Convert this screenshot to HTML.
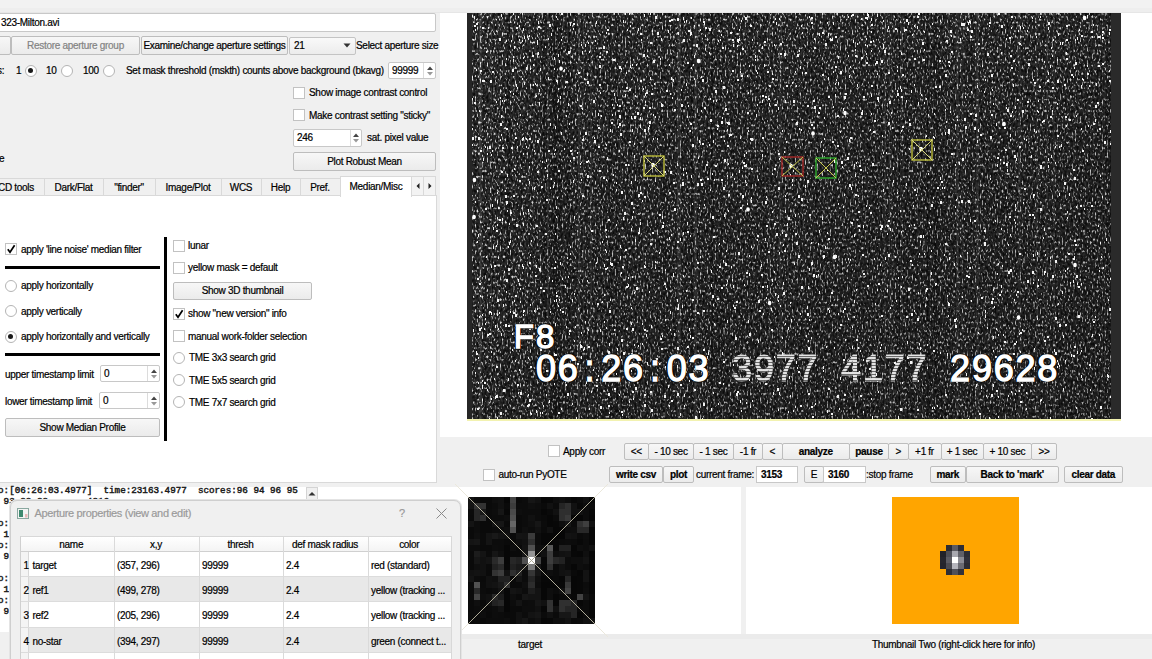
<!DOCTYPE html><html><head><meta charset="utf-8"><style>
*{box-sizing:border-box}
html,body{margin:0;padding:0}
body{width:1152px;height:659px;overflow:hidden;position:relative;background:#f0f0f0;
 font-family:"Liberation Sans",sans-serif;font-size:10px;letter-spacing:-0.3px;color:#000;-webkit-text-stroke-width:0.2px}
.a{position:absolute}
.t{position:absolute;white-space:nowrap;line-height:12px;height:12px}
.btn{position:absolute;border:1px solid #bdbdbd;border-radius:2px;background:linear-gradient(#f7f7f7,#ebebeb);
 text-align:center;white-space:nowrap}
.btn span{position:absolute;left:0;right:0;line-height:12px}
.inp{position:absolute;background:#fff;border:1px solid #c8c8c8;border-radius:2px;white-space:nowrap}
.cb{position:absolute;width:12px;height:12px;border:1px solid #c2c2c2;background:#fff}
.rb{position:absolute;width:12px;height:12px;border:1.5px solid #b4b4b4;border-radius:50%;background:#fff}
.rb.on::after{content:"";position:absolute;left:2px;top:2px;width:5px;height:5px;border-radius:50%;background:#1a1a1a}
.chk::after{content:"";position:absolute;left:3.5px;top:0px;width:3.5px;height:8px;border:solid #000;border-width:0 2px 2px 0;transform:rotate(35deg)}
.mono{font-family:"Liberation Mono",monospace;font-weight:bold;letter-spacing:0}
.b{font-weight:bold}
</style></head><body><div class="a" style="left:0px;top:0px;width:1152px;height:8px;background:#f2f2f2"></div><div class="a" style="left:0px;top:8px;width:1152px;height:5px;background:#eeeeee"></div><div class="a" style="left:0px;top:12px;width:1152px;height:1px;background:#e6e6e6"></div><div class="a" style="left:440px;top:13px;width:712px;height:424px;background:#fff"></div><div class="inp" style="left:-4px;top:13px;width:440px;height:19px"></div><div class="t" style="left:1px;top:16.5px;">323-Milton.avi</div><div class="btn" style="left:-10px;top:36px;width:21px;height:19px;"><span style="top:2.8px;"></span></div><div class="btn" style="left:11px;top:36px;width:129px;height:19px;"><span style="top:2.8px;color:#838383">Restore aperture group</span></div><div class="btn" style="left:141px;top:36px;width:147px;height:19px;"><span style="top:2.8px;">Examine/change aperture settings</span></div><div class="a" style="left:289px;top:37px;width:67px;height:18px;background:linear-gradient(#f9f9f9,#ececec);border:1px solid #c4c4c4;border-radius:2px"></div><div class="t" style="left:294px;top:40.0px;">21</div><svg class="a" style="left:343px;top:43px" width="8" height="5"><path d="M0.5 0.5 L4 4.5 L7.5 0.5z" fill="#333"/></svg><div class="t" style="left:356px;top:40.0px;">Select aperture size</div><div class="t" style="left:-3px;top:64.5px;">s:</div><div class="t" style="left:16px;top:64.5px;">1</div><div class="rb on" style="left:25.0px;top:64.5px"></div><div class="t" style="left:46px;top:64.5px;">10</div><div class="rb" style="left:61.0px;top:64.5px"></div><div class="t" style="left:83px;top:64.5px;">100</div><div class="rb" style="left:102.5px;top:64.5px"></div><div class="t" style="left:126px;top:64.5px;">Set mask threshold (mskth) counts above background (bkavg)</div><div class="inp" style="left:388px;top:62px;width:48px;height:17px"></div><div class="a" style="left:423px;top:63px;width:1px;height:15px;background:#dcdcdc"></div><svg class="a" style="left:425.5px;top:64.5px" width="8" height="12"><path d="M1 5 L4 1.5 L7 5z" fill="#444"/><path d="M1 7 L4 10.5 L7 7z" fill="#999"/></svg><div class="t" style="left:392px;top:64.8px;">99999</div><div class="cb" style="left:293px;top:87.0px"></div><div class="t" style="left:309px;top:87.0px;">Show image contrast control</div><div class="cb" style="left:293px;top:109.0px"></div><div class="t" style="left:309px;top:109.5px;">Make contrast setting "sticky"</div><div class="inp" style="left:293px;top:129px;width:69px;height:18px"></div><div class="a" style="left:350px;top:130px;width:1px;height:16px;background:#dcdcdc"></div><svg class="a" style="left:352.0px;top:132.0px" width="8" height="12"><path d="M1 5 L4 1.5 L7 5z" fill="#444"/><path d="M1 7 L4 10.5 L7 7z" fill="#999"/></svg><div class="t" style="left:297px;top:132.3px;">246</div><div class="t" style="left:367px;top:132.0px;">sat. pixel value</div><div class="btn" style="left:293px;top:152px;width:143px;height:19px;"><span style="top:2.8px;">Plot Robust Mean</span></div><div class="t" style="left:-1px;top:152.5px;">e</div><div class="a" style="left:-20px;top:178px;width:65px;height:18px;background:#f0f0f0;border:1px solid #d9d9d9;border-bottom:none"></div><div class="t" style="left:-2px;top:181.5px;">CD tools</div><div class="a" style="left:44px;top:178px;width:60px;height:18px;background:#f0f0f0;border:1px solid #d9d9d9;border-bottom:none"></div><div class="t" style="left:44px;width:59px;text-align:center;top:181.5px;">Dark/Flat</div><div class="a" style="left:103px;top:178px;width:53px;height:18px;background:#f0f0f0;border:1px solid #d9d9d9;border-bottom:none"></div><div class="t" style="left:103px;width:52px;text-align:center;top:181.5px;">"finder"</div><div class="a" style="left:155px;top:178px;width:67px;height:18px;background:#f0f0f0;border:1px solid #d9d9d9;border-bottom:none"></div><div class="t" style="left:155px;width:66px;text-align:center;top:181.5px;">Image/Plot</div><div class="a" style="left:221px;top:178px;width:41px;height:18px;background:#f0f0f0;border:1px solid #d9d9d9;border-bottom:none"></div><div class="t" style="left:221px;width:40px;text-align:center;top:181.5px;">WCS</div><div class="a" style="left:261px;top:178px;width:40px;height:18px;background:#f0f0f0;border:1px solid #d9d9d9;border-bottom:none"></div><div class="t" style="left:261px;width:39px;text-align:center;top:181.5px;">Help</div><div class="a" style="left:300px;top:178px;width:41px;height:18px;background:#f0f0f0;border:1px solid #d9d9d9;border-bottom:none"></div><div class="t" style="left:300px;width:40px;text-align:center;top:181.5px;">Pref.</div><div class="a" style="left:-5px;top:195px;width:442px;height:288px;background:#fff;border:1px solid #d9d9d9"></div><div class="a" style="left:340px;top:176px;width:72px;height:21px;background:#fff;border:1px solid #d9d9d9;border-bottom:none"></div><div class="t" style="left:340px;width:72px;text-align:center;top:180.5px;">Median/Misc</div><div class="a" style="left:411px;top:176px;width:13px;height:20px;background:#f3f3f3;border:1px solid #d9d9d9"></div><div class="a" style="left:423px;top:176px;width:13px;height:20px;background:#f3f3f3;border:1px solid #d9d9d9"></div><svg class="a" style="left:414px;top:182px" width="20" height="8"><path d="M5.5 1 L2.5 4 L5.5 7z M14.5 1 L17.5 4 L14.5 7z" fill="#222"/></svg><div class="cb" style="left:4.5px;top:243.0px"><svg width="10" height="10" style="position:absolute;left:0;top:0"><path d="M1.8 5.2 L4 8.2 L8.6 1.2" fill="none" stroke="#000" stroke-width="1.7"/></svg></div><div class="t" style="left:21px;top:243.5px;">apply 'line noise' median filter</div><div class="a" style="left:5px;top:266px;width:155px;height:3px;background:#000"></div><div class="rb" style="left:4.5px;top:279.5px"></div><div class="t" style="left:21px;top:280.0px;">apply horizontally</div><div class="rb" style="left:4.5px;top:305.0px"></div><div class="t" style="left:21px;top:305.5px;">apply vertically</div><div class="rb on" style="left:4.5px;top:330.5px"></div><div class="t" style="left:21px;top:331.0px;">apply horizontally and vertically</div><div class="a" style="left:5px;top:353px;width:155px;height:3px;background:#000"></div><div class="t" style="left:5px;top:368.5px;">upper timestamp limit</div><div class="inp" style="left:100px;top:365px;width:60px;height:17px"></div><div class="a" style="left:147px;top:366px;width:1px;height:15px;background:#dcdcdc"></div><svg class="a" style="left:149.5px;top:367.5px" width="8" height="12"><path d="M1 5 L4 1.5 L7 5z" fill="#444"/><path d="M1 7 L4 10.5 L7 7z" fill="#999"/></svg><div class="t" style="left:104px;top:367.8px;">0</div><div class="t" style="left:5px;top:395.5px;">lower timestamp limit</div><div class="inp" style="left:99px;top:392px;width:61px;height:17px"></div><div class="a" style="left:147px;top:393px;width:1px;height:15px;background:#dcdcdc"></div><svg class="a" style="left:149.5px;top:394.5px" width="8" height="12"><path d="M1 5 L4 1.5 L7 5z" fill="#444"/><path d="M1 7 L4 10.5 L7 7z" fill="#999"/></svg><div class="t" style="left:103px;top:394.8px;">0</div><div class="btn" style="left:5px;top:418px;width:155px;height:19px;"><span style="top:2.8px;">Show Median Profile</span></div><div class="a" style="left:164px;top:237px;width:3px;height:204px;background:#000"></div><div class="cb" style="left:173px;top:239.5px"></div><div class="t" style="left:188px;top:240.0px;">lunar</div><div class="cb" style="left:173px;top:261.5px"></div><div class="t" style="left:188px;top:262.0px;">yellow mask = default</div><div class="btn" style="left:173px;top:282px;width:139px;height:18px;"><span style="top:2.3px;">Show 3D thumbnail</span></div><div class="cb" style="left:173px;top:307.5px"><svg width="10" height="10" style="position:absolute;left:0;top:0"><path d="M1.8 5.2 L4 8.2 L8.6 1.2" fill="none" stroke="#000" stroke-width="1.7"/></svg></div><div class="t" style="left:188px;top:308.0px;">show "new version" info</div><div class="cb" style="left:173px;top:330.0px"></div><div class="t" style="left:188px;top:330.5px;">manual work-folder selection</div><div class="rb" style="left:172.5px;top:351.5px"></div><div class="t" style="left:189px;top:352.0px;">TME 3x3 search grid</div><div class="rb" style="left:172.5px;top:374.0px"></div><div class="t" style="left:189px;top:374.5px;">TME 5x5 search grid</div><div class="rb" style="left:172.5px;top:396.0px"></div><div class="t" style="left:189px;top:396.5px;">TME 7x7 search grid</div><div class="cb" style="left:547.5px;top:445.0px"></div><div class="t" style="left:563px;top:445.5px;">Apply corr</div><div class="cb" style="left:482.5px;top:468.5px"></div><div class="t" style="left:498.5px;top:469.0px;">auto-run PyOTE</div><div class="btn" style="left:623.5px;top:443px;width:25.5px;height:17px;"><span style="top:1.5px;">&lt;&lt;</span></div><div class="btn" style="left:648px;top:443px;width:46px;height:17px;"><span style="top:1.5px;">- 10 sec</span></div><div class="btn" style="left:693px;top:443px;width:41px;height:17px;"><span style="top:1.5px;">- 1 sec</span></div><div class="btn" style="left:733px;top:443px;width:30px;height:17px;"><span style="top:1.5px;">-1 fr</span></div><div class="btn" style="left:762px;top:443px;width:20.5px;height:17px;"><span style="top:1.5px;">&lt;</span></div><div class="btn" style="left:781.5px;top:443px;width:68.5px;height:17px;"><span style="top:1.5px;font-weight:bold">analyze</span></div><div class="btn" style="left:849px;top:443px;width:40px;height:17px;"><span style="top:1.5px;font-weight:bold">pause</span></div><div class="btn" style="left:888px;top:443px;width:20.5px;height:17px;"><span style="top:1.5px;">&gt;</span></div><div class="btn" style="left:907.5px;top:443px;width:34.0px;height:17px;"><span style="top:1.5px;">+1 fr</span></div><div class="btn" style="left:940.5px;top:443px;width:43.0px;height:17px;"><span style="top:1.5px;">+ 1 sec</span></div><div class="btn" style="left:982.5px;top:443px;width:49.5px;height:17px;"><span style="top:1.5px;">+ 10 sec</span></div><div class="btn" style="left:1031px;top:443px;width:26px;height:17px;"><span style="top:1.5px;">&gt;&gt;</span></div><div class="btn" style="left:609px;top:466px;width:54px;height:17px;"><span style="top:2.0px;font-weight:bold">write csv</span></div><div class="btn" style="left:663px;top:466px;width:31px;height:17px;"><span style="top:2.0px;font-weight:bold">plot</span></div><div class="t" style="left:696px;top:469.0px;">current frame:</div><div class="inp" style="left:756px;top:466px;width:42px;height:17px;border-radius:0"></div><div class="t" style="left:761px;top:469.0px;font-weight:bold">3153</div><div class="btn" style="left:804px;top:466px;width:20px;height:17px;"><span style="top:2.0px;">E</span></div><div class="inp" style="left:823px;top:466px;width:43px;height:17px;border-radius:0"></div><div class="t" style="left:828px;top:469.0px;font-weight:bold">3160</div><div class="t" style="left:866px;top:469.0px;">:stop frame</div><div class="btn" style="left:929.5px;top:466px;width:36.5px;height:17px;"><span style="top:2.0px;font-weight:bold">mark</span></div><div class="btn" style="left:965.5px;top:466px;width:93.5px;height:17px;"><span style="top:2.0px;font-weight:bold">Back to 'mark'</span></div><div class="btn" style="left:1064px;top:466px;width:58.5px;height:17px;"><span style="top:2.0px;font-weight:bold">clear data</span></div><div class="a" style="left:318px;top:487px;width:423px;height:147px;background:#fff"></div><div class="a" style="left:746px;top:487px;width:406px;height:147px;background:#fff"></div><div class="a" style="left:318px;top:634px;width:834px;height:5px;background:#ebebeb"></div><div class="t" style="left:460px;width:140px;text-align:center;top:638.5px;">target</div><div class="t" style="left:755px;width:397px;text-align:center;top:638.5px;">Thumbnail Two (right-click here for info)</div><div class="a" style="left:892px;top:497px;width:127px;height:127px;background:#ffa500"></div><div class="a" style="left:946.0px;top:545.0px;width:6.399999999999977px;height:6.2999999999999545px;background:#2c2c34"></div><div class="a" style="left:952.1px;top:545.0px;width:6.2999999999999545px;height:6.2999999999999545px;background:#5a5a62"></div><div class="a" style="left:958.1px;top:545.0px;width:6.399999999999977px;height:6.2999999999999545px;background:#2e2e36"></div><div class="a" style="left:940.0px;top:551.0px;width:6.2999999999999545px;height:6.399999999999977px;background:#222228"></div><div class="a" style="left:946.0px;top:551.0px;width:6.399999999999977px;height:6.399999999999977px;background:#4e4e56"></div><div class="a" style="left:952.1px;top:551.0px;width:6.2999999999999545px;height:6.399999999999977px;background:#a8a8b0"></div><div class="a" style="left:958.1px;top:551.0px;width:6.399999999999977px;height:6.399999999999977px;background:#606068"></div><div class="a" style="left:964.2px;top:551.0px;width:6.2999999999999545px;height:6.399999999999977px;background:#2c2c34"></div><div class="a" style="left:940.0px;top:557.1px;width:6.2999999999999545px;height:6.2999999999999545px;background:#26262e"></div><div class="a" style="left:946.0px;top:557.1px;width:6.399999999999977px;height:6.2999999999999545px;background:#5c5c64"></div><div class="a" style="left:952.1px;top:557.1px;width:6.2999999999999545px;height:6.2999999999999545px;background:#ffffff"></div><div class="a" style="left:958.1px;top:557.1px;width:6.399999999999977px;height:6.2999999999999545px;background:#8c8c94"></div><div class="a" style="left:964.2px;top:557.1px;width:6.2999999999999545px;height:6.2999999999999545px;background:#30303a"></div><div class="a" style="left:940.0px;top:563.1px;width:6.2999999999999545px;height:6.399999999999977px;background:#24242c"></div><div class="a" style="left:946.0px;top:563.1px;width:6.399999999999977px;height:6.399999999999977px;background:#4a4a52"></div><div class="a" style="left:952.1px;top:563.1px;width:6.2999999999999545px;height:6.399999999999977px;background:#b4b4bc"></div><div class="a" style="left:958.1px;top:563.1px;width:6.399999999999977px;height:6.399999999999977px;background:#6a6a72"></div><div class="a" style="left:964.2px;top:563.1px;width:6.2999999999999545px;height:6.399999999999977px;background:#2c2c34"></div><div class="a" style="left:946.0px;top:569.2px;width:6.399999999999977px;height:6.2999999999999545px;background:#2e2e36"></div><div class="a" style="left:952.1px;top:569.2px;width:6.2999999999999545px;height:6.2999999999999545px;background:#505058"></div><div class="a" style="left:958.1px;top:569.2px;width:6.399999999999977px;height:6.2999999999999545px;background:#32323a"></div><div class="a" style="left:467px;top:13px;width:654px;height:407px;overflow:hidden"><svg width="654" height="407" style="display:block"><defs><filter id="nz" x="0" y="0" width="654" height="407" filterUnits="userSpaceOnUse" color-interpolation-filters="sRGB"><feTurbulence type="fractalNoise" baseFrequency="0.6 0.35" numOctaves="1" seed="3" result="t"/><feColorMatrix type="matrix" in="t" values="0 0 0 0 1  0 0 0 0 1  0 0 0 0 1  5 0 0 0 -2.75" result="w"/><feTurbulence type="fractalNoise" baseFrequency="0.5 0.3" numOctaves="1" seed="21" result="t2"/><feColorMatrix type="matrix" in="t2" values="0 0 0 0 0.32  0 0 0 0 0.32  0 0 0 0 0.32  1.6 0 0 0 -0.45" result="w2"/><feFlood flood-color="#0e0e0e" result="bg"/><feComposite in="w2" in2="bg" operator="over" result="bg2"/><feComposite in="w" in2="bg2" operator="over" result="c"/><feGaussianBlur in="c" stdDeviation="0.5"/></filter><linearGradient id="g1" x1="0" y1="0" x2="1" y2="0"><stop offset="0" stop-color="#000" stop-opacity="0"/><stop offset="0.15" stop-color="#000" stop-opacity="0.12"/><stop offset="1" stop-color="#000" stop-opacity="0.18"/></linearGradient><linearGradient id="g2" x1="0" y1="0" x2="0" y2="1"><stop offset="0" stop-color="#000" stop-opacity="0"/><stop offset="0.2" stop-color="#000" stop-opacity="0.08"/><stop offset="1" stop-color="#000" stop-opacity="0.15"/></linearGradient><filter id="bb"><feGaussianBlur stdDeviation="0.6"/></filter><filter id="sp" x="0" y="0" width="100%" height="100%"><feGaussianBlur stdDeviation="0.35"/></filter></defs><rect width="654" height="407" fill="#000" filter="url(#nz)"/><rect x="296" y="0" width="1" height="407" fill="#000" fill-opacity="0.18"/><rect x="433" y="0" width="3" height="407" fill="#fff" fill-opacity="0.04"/><rect x="196" y="0" width="2" height="407" fill="#000" fill-opacity="0.12"/><rect x="635" y="0" width="3" height="407" fill="#fff" fill-opacity="0.04"/><rect x="87" y="0" width="3" height="407" fill="#000" fill-opacity="0.25"/><rect x="642" y="0" width="3" height="407" fill="#000" fill-opacity="0.12"/><rect x="210" y="0" width="1" height="407" fill="#fff" fill-opacity="0.08"/><rect x="176" y="0" width="1" height="407" fill="#fff" fill-opacity="0.06"/><rect x="579" y="0" width="2" height="407" fill="#fff" fill-opacity="0.06"/><rect x="321" y="0" width="1" height="407" fill="#fff" fill-opacity="0.04"/><rect x="494" y="0" width="3" height="407" fill="#fff" fill-opacity="0.04"/><rect x="186" y="0" width="1" height="407" fill="#fff" fill-opacity="0.08"/><rect x="532" y="0" width="1" height="407" fill="#fff" fill-opacity="0.04"/><rect x="100" y="0" width="3" height="407" fill="#000" fill-opacity="0.18"/><rect x="586" y="0" width="2" height="407" fill="#fff" fill-opacity="0.06"/><rect x="111" y="0" width="2" height="407" fill="#fff" fill-opacity="0.08"/><rect x="312" y="0" width="3" height="407" fill="#fff" fill-opacity="0.06"/><rect x="153" y="0" width="1" height="407" fill="#fff" fill-opacity="0.04"/><rect x="504" y="0" width="1" height="407" fill="#000" fill-opacity="0.12"/><rect x="606" y="0" width="1" height="407" fill="#fff" fill-opacity="0.04"/><rect x="460" y="0" width="1" height="407" fill="#000" fill-opacity="0.18"/><rect x="402" y="0" width="1" height="407" fill="#000" fill-opacity="0.12"/><rect x="13" y="0" width="1" height="407" fill="#fff" fill-opacity="0.04"/><rect x="551" y="0" width="3" height="407" fill="#fff" fill-opacity="0.06"/><rect x="16" y="0" width="3" height="407" fill="#000" fill-opacity="0.12"/><rect x="77" y="0" width="2" height="407" fill="#000" fill-opacity="0.12"/><rect x="470" y="0" width="2" height="407" fill="#000" fill-opacity="0.12"/><rect x="569" y="0" width="1" height="407" fill="#fff" fill-opacity="0.08"/><rect x="244" y="0" width="2" height="407" fill="#000" fill-opacity="0.12"/><rect x="12" y="0" width="3" height="407" fill="#fff" fill-opacity="0.08"/><rect x="424" y="0" width="1" height="407" fill="#fff" fill-opacity="0.08"/><rect x="422" y="0" width="1" height="407" fill="#fff" fill-opacity="0.08"/><rect x="244" y="0" width="2" height="407" fill="#000" fill-opacity="0.18"/><rect x="570" y="0" width="1" height="407" fill="#fff" fill-opacity="0.04"/><rect x="25" y="0" width="1" height="407" fill="#000" fill-opacity="0.25"/><rect x="440" y="0" width="1" height="407" fill="#000" fill-opacity="0.25"/><rect x="80" y="0" width="2" height="407" fill="#fff" fill-opacity="0.08"/><rect x="116" y="0" width="1" height="407" fill="#fff" fill-opacity="0.06"/><rect x="460" y="0" width="2" height="407" fill="#000" fill-opacity="0.18"/><rect x="24" y="0" width="1" height="407" fill="#fff" fill-opacity="0.06"/><rect x="208" y="0" width="1" height="407" fill="#000" fill-opacity="0.18"/><rect x="432" y="0" width="1" height="407" fill="#000" fill-opacity="0.18"/><rect x="491" y="0" width="1" height="407" fill="#fff" fill-opacity="0.06"/><rect x="271" y="0" width="1" height="407" fill="#000" fill-opacity="0.12"/><rect x="509" y="0" width="3" height="407" fill="#fff" fill-opacity="0.08"/><rect x="467" y="0" width="3" height="407" fill="#000" fill-opacity="0.18"/><rect x="417" y="0" width="2" height="407" fill="#fff" fill-opacity="0.06"/><rect x="349" y="0" width="1" height="407" fill="#000" fill-opacity="0.18"/><rect x="489" y="0" width="2" height="407" fill="#fff" fill-opacity="0.08"/><rect x="91" y="0" width="3" height="407" fill="#000" fill-opacity="0.18"/><rect x="149" y="0" width="2" height="407" fill="#000" fill-opacity="0.18"/><rect x="123" y="0" width="2" height="407" fill="#fff" fill-opacity="0.06"/><rect x="7" y="0" width="1" height="407" fill="#000" fill-opacity="0.12"/><rect x="253" y="0" width="3" height="407" fill="#000" fill-opacity="0.12"/><rect x="282" y="0" width="1" height="407" fill="#000" fill-opacity="0.12"/><rect x="636" y="0" width="1" height="407" fill="#000" fill-opacity="0.25"/><rect x="405" y="0" width="2" height="407" fill="#000" fill-opacity="0.12"/><rect x="639" y="0" width="1" height="407" fill="#000" fill-opacity="0.12"/><rect x="186" y="0" width="1" height="407" fill="#000" fill-opacity="0.25"/><rect x="142" y="0" width="2" height="407" fill="#000" fill-opacity="0.25"/><rect x="302" y="0" width="1" height="407" fill="#fff" fill-opacity="0.08"/><rect x="605" y="0" width="1" height="407" fill="#000" fill-opacity="0.12"/><rect x="358" y="0" width="1" height="407" fill="#000" fill-opacity="0.12"/><rect x="211" y="0" width="3" height="407" fill="#fff" fill-opacity="0.08"/><rect x="227" y="0" width="3" height="407" fill="#fff" fill-opacity="0.08"/><rect x="224" y="0" width="2" height="407" fill="#000" fill-opacity="0.25"/><rect x="653" y="0" width="1" height="407" fill="#000" fill-opacity="0.18"/><rect x="40" y="0" width="3" height="407" fill="#000" fill-opacity="0.25"/><rect x="215" y="0" width="1" height="407" fill="#000" fill-opacity="0.18"/><rect x="432" y="0" width="1" height="407" fill="#000" fill-opacity="0.25"/><rect x="75" y="0" width="14" height="407" fill="#000" fill-opacity="0.1"/><rect width="654" height="407" fill="url(#g1)"/><rect width="654" height="407" fill="url(#g2)"/><g filter="url(#bb)"><ellipse cx="94.0" cy="55.6" rx="1.8" ry="2.2" fill="#fff"/><ellipse cx="231.6" cy="48.0" rx="1.8" ry="2.2" fill="#fff"/><ellipse cx="346.0" cy="120.4" rx="1.8" ry="2.2" fill="#fff"/><ellipse cx="281.0" cy="196.4" rx="1.8" ry="2.2" fill="#fff"/><ellipse cx="367.5" cy="244.0" rx="1.8" ry="2.2" fill="#fff"/><ellipse cx="378.0" cy="100.0" rx="1.8" ry="2.2" fill="#fff"/><ellipse cx="537.0" cy="111.0" rx="1.8" ry="2.2" fill="#fff"/><ellipse cx="551.5" cy="304.5" rx="1.8" ry="2.2" fill="#fff"/><ellipse cx="617.6" cy="5.0" rx="1.8" ry="2.2" fill="#fff"/><ellipse cx="7.4" cy="167.0" rx="1.8" ry="2.2" fill="#fff"/><ellipse cx="7.0" cy="204.0" rx="1.8" ry="2.2" fill="#fff"/><ellipse cx="302.6" cy="290.0" rx="1.8" ry="2.2" fill="#fff"/><ellipse cx="608.0" cy="252.0" rx="1.8" ry="2.2" fill="#fff"/><ellipse cx="186.0" cy="152.0" rx="1.8" ry="2.2" fill="#fff"/><ellipse cx="454.0" cy="136.0" rx="1.8" ry="2.2" fill="#fff"/><ellipse cx="324.0" cy="153.0" rx="1.8" ry="2.2" fill="#fff"/></g><g filter="url(#sp)"><path fill="#f4f4f4" d="m46 0h1v2h-1zm48 0h2v2h-2zm64 0h1v2h-1zm4 0h1v2h-1zm21 0h1v2h-1zm217 0h1v3h-1zm51 0h2v2h-2zm80 0h2v2h-2zm-497 1h1v3h-1zm143 0h1v3h-1zm208 0h2v2h-2zm16 0h1v3h-1zm9 0h1v3h-1zm-405 1h1v2h-1zm379 0h1v2h-1zm236 0h1v3h-1zm-613 1h1v3h-1zm44 0h1v2h-1zm38 0h1v2h-1zm99 0h2v3h-2zm154 0h1v2h-1zm39 0h1v2h-1zm69 0h2v2h-2zm94 0h2v2h-2zm29 0h1v2h-1zm73 0h1v2h-1zm-643 1h2v3h-2zm213 0h1v3h-1zm8 0h1v2h-1zm45 0h1v2h-1zm9 0h2v3h-2zm66 0h2v2h-2zm54 0h2v2h-2zm2 0h1v3h-1zm165 0h1v2h-1zm-355 1h2v3h-2zm98 0h1v2h-1zm4 0h1v2h-1zm82 0h1v2h-1zm10 0h1v3h-1zm-200 1h2v2h-2zm235 0h2v3h-2zm-283 1h1v3h-1zm46 0h2v2h-2zm17 0h1v2h-1zm55 0h1v2h-1zm142 0h1v2h-1zm57 0h1v2h-1zm29 0h1v3h-1zm-431 1h1v3h-1zm58 0h1v3h-1zm88 0h1v2h-1zm19 0h2v2h-2zm70 0h1v2h-1zm197 0h1v3h-1zm-266 1h1v3h-1zm72 0h1v3h-1zm35 0h2v2h-2zm16 0h1v2h-1zm6 0h1v3h-1zm75 0h1v3h-1zm60 0h1v3h-1zm21 0h2v2h-2zm59 0h2v3h-2zm-572 1h2v2h-2zm94 0h1v3h-1zm3 0h2v2h-2zm359 0h1v2h-1zm29 0h2v3h-2zm2 0h2v3h-2zm-414 1h2v3h-2zm322 0h2v2h-2zm222 0h1v2h-1zm-623 1h2v2h-2zm4 0h2v2h-2zm45 0h1v2h-1zm111 0h1v2h-1zm64 0h1v2h-1zm56 0h2v2h-2zm51 0h1v2h-1zm113 0h1v2h-1zm75 0h1v2h-1zm12 0h2v3h-2zm65 0h2v2h-2zm-528 1h2v2h-2zm350 0h1v3h-1zm29 0h1v3h-1zm103 0h1v3h-1zm-538 1h2v2h-2zm6 0h1v2h-1zm28 0h2v2h-2zm189 0h2v2h-2zm306 0h1v2h-1zm12 0h1v2h-1zm25 0h1v3h-1zm69 0h1v2h-1zm-594 1h1v3h-1zm50 0h1v2h-1zm65 0h1v3h-1zm71 0h2v3h-2zm186 0h2v2h-2zm-420 1h1v2h-1zm132 0h2v2h-2zm20 0h1v2h-1zm73 0h1v2h-1zm39 0h1v2h-1zm165 0h1v3h-1zm1 0h2v2h-2zm62 0h2v2h-2zm112 0h1v2h-1zm30 0h2v2h-2zm-457 1h1v2h-1zm16 0h1v3h-1zm20 0h2v2h-2zm31 0h1v2h-1zm231 0h2v3h-2zm21 0h2v3h-2zm47 0h1v2h-1zm9 0h1v2h-1zm-156 1h1v2h-1zm53 0h1v2h-1zm167 0h2v2h-2zm11 0h2v2h-2zm-496 1h1v2h-1zm51 0h2v3h-2zm21 0h1v3h-1zm12 0h2v3h-2zm40 0h2v2h-2zm72 0h1v2h-1zm20 0h2v2h-2zm287 0h1v3h-1zm-558 1h1v3h-1zm89 0h2v2h-2zm179 0h1v3h-1zm9 0h1v3h-1zm230 0h1v3h-1zm-368 1h1v2h-1zm31 0h1v2h-1zm191 0h1v2h-1zm146 0h1v2h-1zm44 0h1v2h-1zm-573 1h1v2h-1zm176 0h1v2h-1zm232 0h1v2h-1zm14 0h1v2h-1zm130 0h2v2h-2zm-557 1h1v3h-1zm311 0h2v2h-2zm135 0h2v2h-2zm66 0h1v2h-1zm56 0h1v2h-1zm6 0h2v2h-2zm-89 1h2v2h-2zm68 0h1v3h-1zm25 0h2v2h-2zm-603 1h2v3h-2zm29 0h1v2h-1zm20 0h1v2h-1zm113 0h1v3h-1zm78 0h1v3h-1zm75 0h1v2h-1zm16 0h1v3h-1zm2 0h1v3h-1zm34 0h1v2h-1zm94 0h1v3h-1zm46 0h1v2h-1zm-487 1h1v2h-1zm42 0h1v2h-1zm80 0h1v2h-1zm42 0h2v3h-2zm37 0h1v2h-1zm12 0h2v2h-2zm5 0h2v3h-2zm15 0h1v2h-1zm79 0h2v2h-2zm222 0h1v2h-1zm13 0h2v2h-2zm9 0h1v2h-1zm-569 1h1v2h-1zm5 0h1v2h-1zm11 0h1v2h-1zm15 0h1v3h-1zm58 0h1v2h-1zm123 0h1v2h-1zm135 0h1v3h-1zm20 0h1v2h-1zm73 0h2v2h-2zm-208 1h1v2h-1zm26 0h2v2h-2zm106 0h2v2h-2zm-403 1h1v3h-1zm70 0h1v3h-1zm51 0h1v2h-1zm62 0h2v2h-2zm272 0h2v3h-2zm138 0h1v3h-1zm2 0h1v3h-1zm-282 1h2v2h-2zm45 0h2v3h-2zm32 0h1v2h-1zm121 0h2v2h-2zm41 0h2v2h-2zm-438 1h1v2h-1zm4 0h1v3h-1zm111 0h2v3h-2zm37 0h1v3h-1zm41 0h1v2h-1zm91 0h1v2h-1zm18 0h1v3h-1zm-146 1h1v2h-1zm130 0h1v2h-1zm-353 1h1v3h-1zm31 0h1v2h-1zm58 0h2v3h-2zm159 0h1v3h-1zm121 0h1v3h-1zm-161 1h2v2h-2zm92 0h2v2h-2zm237 0h1v2h-1zm-346 1h1v2h-1zm37 0h2v2h-2zm113 1h1v2h-1zm69 0h1v2h-1zm-165 1h1v2h-1zm40 0h1v2h-1zm72 0h1v2h-1zm13 0h2v3h-2zm-398 1h1v2h-1zm82 0h2v3h-2zm14 0h1v3h-1zm7 0h1v2h-1zm17 0h2v2h-2zm278 0h1v2h-1zm67 0h2v2h-2zm-413 1h1v2h-1zm171 0h1v2h-1zm192 0h1v3h-1zm100 0h1v2h-1zm65 0h1v3h-1zm-528 1h1v2h-1zm202 0h1v2h-1zm40 0h2v2h-2zm4 0h2v3h-2zm82 0h1v2h-1zm109 0h1v3h-1zm12 0h2v3h-2zm-429 1h1v3h-1zm85 0h2v3h-2zm154 0h2v3h-2zm-265 1h2v2h-2zm115 0h1v2h-1zm47 0h1v3h-1zm61 0h1v3h-1zm93 0h1v2h-1zm7 0h2v2h-2zm155 0h2v2h-2zm42 0h1v2h-1zm-539 1h1v2h-1zm86 0h2v2h-2zm239 0h1v3h-1zm-315 1h1v2h-1zm31 0h1v3h-1zm307 0h2v2h-2zm-355 1h1v2h-1zm154 0h1v2h-1zm254 0h2v2h-2zm152 0h2v2h-2zm-553 1h1v3h-1zm100 0h2v2h-2zm142 0h1v2h-1zm168 0h2v2h-2zm134 0h1v2h-1zm-498 1h1v3h-1zm94 0h2v3h-2zm228 0h2v3h-2zm58 0h2v2h-2zm74 0h2v2h-2zm-137 1h2v3h-2zm72 0h2v2h-2zm96 0h1v2h-1zm-357 1h2v2h-2zm179 0h2v2h-2zm209 0h2v3h-2zm-200 1h1v2h-1zm153 0h2v3h-2zm74 0h2v2h-2zm-569 1h1v2h-1zm99 0h1v2h-1zm4 0h1v2h-1zm33 0h1v2h-1zm24 0h1v2h-1zm71 0h1v3h-1zm-165 1h2v3h-2zm31 0h1v3h-1zm119 0h1v2h-1zm200 0h1v2h-1zm33 0h1v2h-1zm68 0h1v3h-1zm37 0h1v2h-1zm11 0h2v2h-2zm-479 1h2v3h-2zm181 0h1v3h-1zm35 0h2v2h-2zm15 0h1v2h-1zm47 0h1v2h-1zm-427 1h2v3h-2zm56 0h1v3h-1zm165 0h1v2h-1zm79 0h1v2h-1zm241 0h2v2h-2zm63 0h1v2h-1zm-604 1h1v2h-1zm60 0h1v2h-1zm10 0h1v3h-1zm14 0h1v2h-1zm67 0h1v2h-1zm-145 1h1v2h-1zm36 0h2v3h-2zm52 0h1v2h-1zm-84 1h2v2h-2zm252 0h2v2h-2zm24 0h1v2h-1zm141 0h1v2h-1zm38 0h1v3h-1zm174 0h1v2h-1zm-617 1h2v2h-2zm248 0h1v2h-1zm27 0h2v2h-2zm28 0h1v2h-1zm38 0h1v2h-1zm7 0h2v3h-2zm13 0h1v2h-1zm-275 1h2v2h-2zm48 0h1v2h-1zm131 0h1v2h-1zm45 0h1v2h-1zm3 0h2v2h-2zm83 0h2v2h-2zm160 0h1v3h-1zm-276 1h1v2h-1zm105 0h1v2h-1zm210 0h2v2h-2zm-500 1h1v2h-1zm235 0h2v2h-2zm80 0h2v2h-2zm43 0h2v3h-2zm46 0h2v3h-2zm80 0h2v2h-2zm-330 1h2v2h-2zm6 0h1v2h-1zm102 0h1v3h-1zm-148 1h1v2h-1zm372 0h1v2h-1zm-525 1h1v3h-1zm102 0h1v3h-1zm21 0h1v3h-1zm157 0h1v3h-1zm-306 1h1v2h-1zm62 0h1v2h-1zm110 0h1v2h-1zm78 0h2v2h-2zm310 0h1v2h-1zm-409 1h1v3h-1zm29 0h2v3h-2zm35 0h2v2h-2zm99 0h1v2h-1zm149 0h1v2h-1zm48 0h1v2h-1zm50 0h1v2h-1zm-601 1h2v2h-2zm2 0h1v2h-1zm6 0h2v3h-2zm66 0h2v2h-2zm84 0h2v2h-2zm81 0h1v2h-1zm326 0h2v2h-2zm10 0h2v3h-2zm52 0h1v2h-1zm1 0h1v2h-1zm-553 1h1v2h-1zm9 0h2v2h-2zm21 0h2v3h-2zm205 1h1v2h-1zm46 0h1v3h-1zm196 0h2v2h-2zm-510 1h1v2h-1zm11 0h1v2h-1zm119 0h1v2h-1zm32 0h1v3h-1zm149 0h1v2h-1zm261 0h1v3h-1zm-580 1h1v3h-1zm14 0h1v2h-1zm3 0h1v2h-1zm66 0h2v2h-2zm258 0h1v3h-1zm57 0h1v2h-1zm99 0h1v3h-1zm51 0h2v2h-2zm-295 1h2v2h-2zm17 0h2v2h-2zm10 0h1v2h-1zm75 0h2v2h-2zm106 0h1v3h-1zm104 0h1v3h-1zm8 0h1v2h-1zm-524 1h1v2h-1zm158 0h2v3h-2zm177 0h1v3h-1zm35 0h2v2h-2zm4 0h2v2h-2zm100 0h2v2h-2zm76 0h1v2h-1zm-598 1h1v2h-1zm109 0h2v2h-2zm426 0h2v2h-2zm-494 1h1v2h-1zm85 0h1v2h-1zm-104 1h1v3h-1zm90 0h2v2h-2zm52 0h1v2h-1zm220 0h1v3h-1zm91 0h1v2h-1zm-326 1h2v2h-2zm49 0h2v3h-2zm182 0h1v2h-1zm14 0h1v3h-1zm-401 1h1v2h-1zm217 0h1v2h-1zm244 0h1v2h-1zm13 0h1v2h-1zm-384 1h1v2h-1zm46 0h2v2h-2zm102 0h1v2h-1zm-235 1h1v2h-1zm101 0h1v3h-1zm31 0h1v3h-1zm6 0h2v2h-2zm19 0h1v2h-1zm175 0h2v2h-2zm52 0h2v3h-2zm-392 1h1v2h-1zm120 0h1v3h-1zm210 0h1v3h-1zm36 0h1v3h-1zm50 0h1v2h-1zm-385 1h1v2h-1zm99 0h1v2h-1zm127 0h2v2h-2zm-202 1h1v3h-1zm205 0h2v2h-2zm63 0h2v2h-2zm16 0h2v3h-2zm19 0h2v2h-2zm38 0h2v2h-2zm64 0h1v2h-1zm-465 1h1v2h-1zm172 0h1v2h-1zm205 0h2v3h-2zm-405 1h1v2h-1zm238 0h1v2h-1zm58 0h2v2h-2zm158 0h1v2h-1zm-368 1h1v3h-1zm19 0h1v2h-1zm440 0h2v2h-2zm-515 1h1v2h-1zm2 0h1v2h-1zm89 0h2v3h-2zm120 0h1v2h-1zm3 0h1v2h-1zm46 0h1v3h-1zm23 0h1v3h-1zm8 0h2v3h-2zm20 0h2v2h-2zm65 0h1v2h-1zm28 0h1v2h-1zm132 0h1v2h-1zm-542 1h1v2h-1zm149 0h1v2h-1zm244 0h2v3h-2zm138 0h2v2h-2zm91 0h1v2h-1zm-644 1h2v2h-2zm65 0h1v3h-1zm379 0h1v3h-1zm6 0h1v2h-1zm173 0h2v2h-2zm-529 1h1v3h-1zm93 0h1v3h-1zm108 0h1v3h-1zm224 0h1v2h-1zm64 0h1v2h-1zm-445 1h1v2h-1zm5 0h1v2h-1zm44 0h2v3h-2zm20 0h2v3h-2zm76 0h1v2h-1zm18 0h2v2h-2zm-195 1h2v2h-2zm39 0h2v2h-2zm69 0h1v2h-1zm119 0h2v2h-2zm288 0h2v3h-2zm-281 1h2v3h-2zm19 0h1v2h-1zm182 0h1v3h-1zm102 0h1v2h-1zm-474 1h2v2h-2zm6 0h2v2h-2zm55 0h2v2h-2zm74 0h1v3h-1zm41 0h2v2h-2zm187 0h1v2h-1zm-424 1h1v2h-1zm143 0h2v3h-2zm118 0h1v3h-1zm-169 1h2v2h-2zm271 0h1v2h-1zm62 0h2v3h-2zm-528 1h1v2h-1zm222 0h1v2h-1zm161 0h1v2h-1zm160 0h2v3h-2zm15 0h1v2h-1zm15 0h1v2h-1zm-102 1h1v2h-1zm62 0h1v2h-1zm26 0h1v2h-1zm-401 1h2v3h-2zm110 0h2v2h-2zm71 0h2v2h-2zm43 0h2v3h-2zm30 0h1v2h-1zm-293 1h1v3h-1zm273 0h1v2h-1zm63 0h1v2h-1zm36 0h2v2h-2zm-450 1h1v2h-1zm92 0h1v2h-1zm41 0h1v2h-1zm103 0h1v3h-1zm172 0h1v2h-1zm47 0h2v3h-2zm16 0h2v2h-2zm-490 1h1v3h-1zm65 0h1v2h-1zm35 0h1v2h-1zm18 0h2v3h-2zm218 0h2v2h-2zm139 0h1v2h-1zm34 0h2v2h-2zm66 0h1v2h-1zm-445 1h1v3h-1zm3 0h2v3h-2zm21 0h1v2h-1zm32 0h1v2h-1zm363 0h2v2h-2zm15 0h2v2h-2zm-425 1h1v3h-1zm82 0h1v2h-1zm102 0h1v2h-1zm290 0h2v3h-2zm-630 1h1v2h-1zm480 0h2v3h-2zm-254 1h2v3h-2zm199 0h1v2h-1zm48 0h1v2h-1zm112 0h2v2h-2zm26 0h1v3h-1zm21 0h2v2h-2zm-242 1h2v2h-2zm169 0h2v2h-2zm-394 1h2v3h-2zm72 0h2v3h-2zm225 0h1v2h-1zm96 0h1v2h-1zm-431 1h2v2h-2zm116 0h1v2h-1zm1 0h2v3h-2zm68 0h2v3h-2zm92 0h2v3h-2zm-421 1h1v2h-1zm33 0h2v3h-2zm17 0h1v2h-1zm33 0h1v3h-1zm19 0h1v2h-1zm50 0h2v3h-2zm71 0h2v2h-2zm219 0h2v3h-2zm87 0h1v3h-1zm97 0h2v2h-2zm-282 1h2v2h-2zm144 0h1v2h-1zm-315 1h1v3h-1zm9 0h1v2h-1zm68 0h2v2h-2zm349 0h1v2h-1zm22 0h1v2h-1zm-533 1h1v3h-1zm63 0h1v2h-1zm284 0h2v2h-2zm63 0h2v3h-2zm-367 1h2v2h-2zm50 0h1v3h-1zm166 0h1v2h-1zm78 0h1v2h-1zm82 0h2v3h-2zm30 0h2v2h-2zm-532 1h1v2h-1zm34 0h2v2h-2zm211 0h1v2h-1zm82 0h1v2h-1zm282 0h1v2h-1zm18 0h2v2h-2zm20 0h2v2h-2zm-509 1h1v3h-1zm22 0h1v3h-1zm12 0h2v3h-2zm83 0h1v2h-1zm74 0h1v2h-1zm69 0h1v2h-1zm78 0h2v3h-2zm30 0h1v3h-1zm56 0h1v3h-1zm-344 1h1v2h-1zm58 0h1v2h-1zm34 0h1v2h-1zm119 0h1v2h-1zm209 0h1v3h-1zm-270 1h1v2h-1zm33 0h2v2h-2zm163 0h1v2h-1zm-475 1h1v3h-1zm24 0h2v3h-2zm360 0h1v3h-1zm3 0h2v2h-2zm-328 1h2v3h-2zm-119 1h1v2h-1zm228 0h1v3h-1zm1 0h2v2h-2zm250 0h2v2h-2zm30 0h1v3h-1zm-128 1h1v2h-1zm44 0h1v2h-1zm131 0h2v2h-2zm-336 1h1v2h-1zm212 0h1v2h-1zm57 0h2v3h-2zm-518 1h2v3h-2zm6 0h2v3h-2zm37 0h2v2h-2zm8 0h1v3h-1zm71 0h1v2h-1zm146 0h1v2h-1zm22 0h2v2h-2zm88 0h2v2h-2zm84 0h1v2h-1zm-412 1h1v3h-1zm4 0h1v2h-1zm3 0h2v2h-2zm54 0h1v3h-1zm70 0h1v2h-1zm4 0h1v2h-1zm93 0h2v2h-2zm1 0h2v3h-2zm21 0h1v2h-1zm52 0h1v2h-1zm200 0h1v2h-1zm-524 1h1v2h-1zm82 0h2v2h-2zm267 0h1v3h-1zm117 0h1v2h-1zm44 0h1v2h-1zm16 0h1v2h-1zm-489 1h2v3h-2zm57 0h2v3h-2zm105 0h1v3h-1zm14 0h1v3h-1zm11 0h1v2h-1zm253 0h1v3h-1zm-348 1h2v2h-2zm157 0h1v2h-1zm35 0h1v2h-1zm11 0h2v2h-2zm272 0h2v3h-2zm-470 2h1v2h-1zm68 0h2v2h-2zm408 0h2v2h-2zm-638 1h1v2h-1zm134 0h1v2h-1zm86 0h2v3h-2zm17 0h1v2h-1zm352 0h1v3h-1zm-334 1h2v2h-2zm110 0h2v2h-2zm-352 1h1v2h-1zm4 0h2v3h-2zm28 0h1v2h-1zm9 0h1v2h-1zm72 0h2v2h-2zm421 0h2v2h-2zm36 0h1v2h-1zm4 0h1v2h-1zm-557 1h2v2h-2zm9 0h2v2h-2zm53 1h1v2h-1zm345 0h1v2h-1zm25 0h1v3h-1zm-467 1h1v2h-1zm2 0h1v2h-1zm86 0h1v2h-1zm268 0h1v3h-1zm182 0h2v2h-2zm-525 1h2v2h-2zm12 0h1v2h-1zm42 0h1v2h-1zm14 0h2v2h-2zm22 0h2v2h-2zm49 0h1v2h-1zm463 0h2v2h-2zm-298 1h1v2h-1zm-207 1h1v2h-1zm169 0h1v2h-1zm137 0h1v2h-1zm3 0h1v2h-1zm227 0h2v2h-2zm-626 1h1v2h-1zm36 0h1v2h-1zm31 0h1v2h-1zm224 0h2v2h-2zm173 0h2v2h-2zm-460 1h1v2h-1zm253 0h1v3h-1zm18 0h1v3h-1zm-128 1h1v3h-1zm128 0h1v2h-1zm252 0h2v3h-2zm17 0h1v3h-1zm20 0h1v3h-1zm-478 2h2v2h-2zm34 0h1v3h-1zm91 0h1v2h-1zm149 0h2v3h-2zm150 0h2v2h-2zm-514 1h1v2h-1zm296 0h1v2h-1zm183 0h2v3h-2zm54 0h1v3h-1zm32 0h1v3h-1zm-565 1h1v2h-1zm241 0h2v3h-2zm276 0h1v2h-1zm-454 1h1v2h-1zm24 0h1v2h-1zm18 0h1v2h-1zm56 0h1v2h-1zm190 0h1v3h-1zm253 0h1v2h-1zm27 0h2v2h-2zm-572 1h1v2h-1zm44 0h2v2h-2zm255 0h2v3h-2zm-98 1h1v2h-1zm1 0h1v2h-1zm112 0h1v2h-1zm103 0h1v3h-1zm44 0h2v2h-2zm52 0h1v2h-1zm-586 1h1v2h-1zm111 0h1v2h-1zm97 0h1v3h-1zm51 0h1v2h-1zm144 0h2v3h-2zm134 0h2v3h-2zm-381 1h2v2h-2zm3 0h1v2h-1zm78 0h2v2h-2zm40 0h1v3h-1zm108 0h1v3h-1zm101 0h1v2h-1zm42 0h1v3h-1zm-282 1h2v2h-2zm29 0h1v2h-1zm0 0h2v2h-2zm110 0h1v2h-1zm5 0h2v2h-2zm181 0h2v2h-2zm8 0h1v3h-1zm-519 1h1v2h-1zm313 0h1v2h-1zm198 0h2v3h-2zm-495 1h1v2h-1zm197 0h1v2h-1zm69 0h1v2h-1zm82 0h1v3h-1zm-379 1h1v2h-1zm169 0h1v3h-1zm68 0h2v2h-2zm23 0h2v2h-2zm53 1h1v2h-1zm33 0h2v2h-2zm147 0h1v3h-1zm66 0h2v2h-2zm-515 1h2v2h-2zm41 0h2v2h-2zm140 0h1v3h-1zm54 0h1v2h-1zm320 0h2v2h-2zm-612 1h2v2h-2zm36 0h2v2h-2zm127 0h2v2h-2zm6 0h2v3h-2zm16 1h1v2h-1zm26 1h1v2h-1zm60 0h1v2h-1zm156 0h1v2h-1zm-421 1h1v3h-1zm40 0h1v3h-1zm66 0h1v2h-1zm70 0h1v2h-1zm49 0h1v2h-1zm58 0h1v2h-1zm65 0h1v3h-1zm-268 1h2v3h-2zm104 0h1v3h-1zm36 0h1v2h-1zm373 0h1v2h-1zm-497 2h2v2h-2zm337 0h1v3h-1zm134 0h1v3h-1zm0 0h2v3h-2zm-523 1h1v2h-1zm156 0h2v2h-2zm27 0h1v2h-1zm256 0h1v2h-1zm-409 1h1v2h-1zm25 0h1v2h-1zm29 0h1v2h-1zm65 0h2v2h-2zm14 0h1v2h-1zm7 0h2v2h-2zm37 0h1v2h-1zm34 0h1v3h-1zm-273 1h2v2h-2zm54 0h1v3h-1zm82 0h1v2h-1zm90 0h1v2h-1zm62 0h2v3h-2zm86 0h1v3h-1zm-364 1h1v3h-1zm102 0h1v3h-1zm208 0h1v2h-1zm102 0h2v2h-2zm-387 1h1v2h-1zm62 0h1v2h-1zm57 0h2v2h-2zm9 0h2v3h-2zm382 0h2v3h-2zm-367 1h2v3h-2zm4 0h2v3h-2zm205 0h1v3h-1zm-224 1h2v2h-2zm64 0h1v2h-1zm46 0h1v2h-1zm57 0h2v3h-2zm266 0h1v2h-1zm-310 1h1v3h-1zm-264 1h2v2h-2zm12 0h1v2h-1zm-19 1h1v3h-1zm16 0h1v2h-1zm173 0h2v3h-2zm55 0h2v3h-2zm73 0h1v3h-1zm86 0h2v2h-2zm5 0h1v2h-1zm2 0h1v2h-1zm80 1h2v2h-2zm-408 1h1v2h-1zm94 0h1v2h-1zm173 0h1v3h-1zm31 0h2v2h-2zm-409 1h1v2h-1zm116 1h2v3h-2zm-124 1h1v2h-1zm143 0h2v2h-2zm29 0h2v2h-2zm228 0h1v2h-1zm-429 1h1v2h-1zm591 0h1v3h-1zm10 0h1v3h-1zm-431 1h2v3h-2zm90 0h2v2h-2zm116 0h1v2h-1zm11 0h1v2h-1zm1 0h1v2h-1zm60 0h1v2h-1zm117 0h2v2h-2zm-528 1h2v3h-2zm8 0h2v2h-2zm69 0h2v2h-2zm160 0h2v3h-2zm43 0h1v2h-1zm13 0h2v3h-2zm60 0h1v2h-1zm256 0h2v2h-2zm-470 1h2v2h-2zm122 0h1v2h-1zm267 0h1v2h-1zm69 0h1v2h-1zm-545 1h1v2h-1zm194 0h1v2h-1zm182 0h1v2h-1zm73 0h1v2h-1zm-205 1h2v3h-2zm-255 1h2v2h-2zm410 0h1v2h-1zm-489 1h1v3h-1zm30 0h1v3h-1zm145 0h1v2h-1zm109 0h1v3h-1zm210 0h2v3h-2zm7 0h2v3h-2zm-493 1h1v2h-1zm31 0h2v3h-2zm259 0h2v3h-2zm175 0h2v3h-2zm-309 1h2v3h-2zm392 0h1v2h-1zm-517 1h1v2h-1zm186 0h1v2h-1zm55 0h1v2h-1zm91 0h1v2h-1zm-346 1h1v3h-1zm212 0h1v2h-1zm227 0h2v3h-2zm84 0h1v3h-1zm-149 1h1v2h-1zm47 0h1v2h-1zm167 0h2v2h-2zm11 0h2v2h-2zm-535 1h1v3h-1zm287 0h1v2h-1zm112 0h1v2h-1zm121 0h1v2h-1zm-578 1h1v2h-1zm201 0h1v2h-1zm41 0h2v2h-2zm129 0h1v2h-1zm-384 1h2v2h-2zm189 0h2v3h-2zm366 0h2v3h-2zm44 0h1v2h-1zm-556 1h1v3h-1zm487 0h1v2h-1zm98 0h1v2h-1zm-606 1h1v2h-1zm221 0h1v2h-1zm57 0h1v3h-1zm115 0h1v2h-1zm-267 1h1v2h-1zm139 0h1v2h-1zm86 0h2v2h-2zm209 0h1v2h-1zm-557 1h2v2h-2zm13 0h1v3h-1zm101 0h2v3h-2zm246 0h2v2h-2zm-211 2h2v2h-2zm65 0h1v3h-1zm71 0h1v3h-1zm14 0h2v2h-2zm220 0h2v2h-2zm3 0h2v2h-2zm-502 1h1v2h-1zm26 1h1v2h-1zm18 0h1v3h-1zm58 0h1v3h-1zm30 0h1v3h-1zm50 0h2v3h-2zm297 0h2v2h-2zm109 0h2v3h-2zm-621 1h1v2h-1zm126 0h1v3h-1zm165 0h2v3h-2zm34 0h1v3h-1zm212 0h1v2h-1zm33 0h1v2h-1zm-565 1h1v3h-1zm462 0h1v2h-1zm153 0h1v3h-1zm-618 1h2v2h-2zm1 0h1v2h-1zm108 0h2v2h-2zm362 0h1v3h-1zm44 0h1v2h-1zm-126 1h2v2h-2zm86 0h2v2h-2zm21 0h1v2h-1zm-355 2h1v3h-1zm23 0h1v2h-1zm24 0h1v3h-1zm164 0h2v2h-2zm78 0h1v2h-1zm86 0h1v2h-1zm-506 1h1v2h-1zm14 0h1v3h-1zm251 0h2v2h-2zm13 0h1v3h-1zm-290 1h1v2h-1zm19 0h2v3h-2zm100 0h1v2h-1zm298 0h1v2h-1zm-378 1h2v2h-2zm126 0h2v3h-2zm104 0h2v2h-2zm92 0h2v2h-2zm5 0h1v3h-1zm18 0h2v3h-2zm6 0h2v2h-2zm22 0h1v2h-1zm189 0h1v2h-1zm-168 1h1v2h-1zm-437 1h1v3h-1zm138 1h1v3h-1zm8 0h1v3h-1zm241 0h2v2h-2zm10 0h1v3h-1zm111 0h1v2h-1zm43 0h1v3h-1zm-439 1h2v2h-2zm254 0h1v2h-1zm-363 1h2v2h-2zm95 0h2v2h-2zm48 0h1v3h-1zm180 0h1v3h-1zm165 0h2v2h-2zm-297 1h2v2h-2zm214 0h1v2h-1zm-263 1h2v2h-2zm14 0h2v2h-2zm31 0h1v3h-1zm99 0h1v2h-1zm45 0h1v2h-1zm-282 1h2v2h-2zm10 0h1v2h-1zm221 0h2v3h-2zm19 0h2v2h-2zm92 0h1v2h-1zm-409 1h1v3h-1zm193 0h1v2h-1zm114 0h2v3h-2zm69 0h1v3h-1zm156 0h1v2h-1zm-320 1h1v2h-1zm67 0h2v2h-2zm163 0h2v3h-2zm3 0h1v3h-1zm-405 1h1v2h-1zm88 0h1v2h-1zm107 0h2v2h-2zm-44 1h1v3h-1zm374 0h1v2h-1zm-363 1h1v3h-1zm58 0h1v2h-1zm27 0h1v3h-1zm63 0h2v2h-2zm278 0h1v3h-1zm-471 1h1v3h-1zm122 0h1v2h-1zm-247 1h1v3h-1zm21 0h1v2h-1zm192 0h1v2h-1zm351 0h2v2h-2zm-597 1h1v2h-1zm125 0h1v2h-1zm75 0h2v2h-2zm243 0h1v2h-1zm-411 1h1v3h-1zm287 0h2v3h-2zm15 0h1v2h-1zm173 0h2v2h-2zm116 0h1v2h-1zm-450 1h2v2h-2zm69 0h1v2h-1zm99 0h1v2h-1zm127 0h2v2h-2zm-162 1h1v2h-1zm201 0h2v2h-2zm24 0h1v2h-1zm67 0h2v2h-2zm-579 1h1v2h-1zm124 0h1v3h-1zm-127 1h1v3h-1zm15 0h1v2h-1zm62 0h1v2h-1zm181 0h1v2h-1zm74 0h1v3h-1zm-220 3h1v2h-1zm20 0h2v2h-2zm101 1h1v2h-1zm58 0h2v2h-2zm147 0h1v2h-1zm-325 1h1v2h-1zm162 0h2v2h-2zm-109 1h1v2h-1zm79 0h2v3h-2zm41 0h1v2h-1zm188 0h1v2h-1zm70 0h1v3h-1zm-467 1h1v2h-1zm349 0h1v2h-1zm5 0h1v2h-1zm95 0h2v2h-2zm49 0h2v2h-2zm-538 1h1v2h-1zm332 0h2v2h-2zm26 0h2v3h-2zm56 0h1v2h-1zm89 0h1v3h-1zm12 0h1v2h-1zm-296 1h1v2h-1zm49 0h2v3h-2zm25 0h2v3h-2zm12 0h2v3h-2zm125 0h1v2h-1zm-474 1h1v2h-1zm134 0h1v3h-1zm80 0h1v2h-1zm123 0h1v3h-1zm72 0h1v2h-1zm179 0h1v2h-1zm27 0h1v2h-1zm-603 1h1v2h-1zm69 0h1v2h-1zm318 0h1v3h-1zm64 0h1v3h-1zm101 0h1v2h-1zm-202 1h1v2h-1zm26 0h1v2h-1zm199 0h2v2h-2zm-223 1h1v2h-1zm-127 1h1v2h-1zm187 0h2v2h-2zm145 0h2v3h-2zm-500 1h1v2h-1zm100 0h1v2h-1zm-126 1h2v2h-2zm31 0h1v3h-1zm36 0h1v2h-1zm14 0h1v3h-1zm87 0h2v2h-2zm114 0h2v3h-2zm-200 1h2v3h-2zm114 0h2v3h-2zm69 0h1v2h-1zm160 0h1v3h-1zm44 0h1v2h-1zm-476 1h1v3h-1zm82 0h1v3h-1zm157 0h1v3h-1zm119 0h1v2h-1zm32 0h1v2h-1zm-418 1h2v2h-2zm42 0h1v3h-1zm108 0h1v2h-1zm358 0h1v2h-1zm-511 1h1v2h-1zm32 0h1v3h-1zm99 0h2v2h-2zm22 0h2v2h-2zm75 0h2v2h-2zm12 0h1v2h-1zm387 0h1v3h-1zm-564 1h2v2h-2zm53 0h1v2h-1zm48 0h1v2h-1zm314 0h2v2h-2zm134 0h1v2h-1zm-595 1h2v3h-2zm31 0h2v3h-2zm66 0h2v2h-2zm204 0h1v3h-1zm258 0h1v2h-1zm-402 1h1v2h-1zm345 0h2v3h-2zm-299 1h1v3h-1zm354 0h1v2h-1zm34 0h1v2h-1zm-595 1h1v2h-1zm270 0h1v2h-1zm234 0h2v3h-2zm24 0h2v3h-2zm12 0h2v2h-2zm-423 1h1v2h-1zm125 0h2v2h-2zm185 0h1v3h-1zm-258 1h1v2h-1zm76 0h1v3h-1zm114 0h2v2h-2zm134 0h1v2h-1zm47 0h1v2h-1zm-371 1h1v3h-1zm88 0h2v2h-2zm52 0h2v3h-2zm5 0h1v2h-1zm-283 1h2v2h-2zm148 0h1v2h-1zm133 0h1v3h-1zm150 0h2v2h-2zm86 0h2v3h-2zm24 0h2v3h-2zm-508 1h1v2h-1zm64 0h1v2h-1zm270 0h1v2h-1zm66 0h2v2h-2zm-419 1h1v2h-1zm79 0h1v2h-1zm270 0h1v2h-1zm-421 1h2v2h-2zm85 0h1v2h-1zm548 0h1v2h-1zm-604 1h2v3h-2zm12 0h1v3h-1zm214 0h1v2h-1zm40 0h1v3h-1zm266 0h1v2h-1zm-486 1h1v2h-1zm35 0h1v2h-1zm140 0h1v2h-1zm300 0h2v3h-2zm46 0h1v3h-1zm43 1h1v2h-1zm-333 1h1v3h-1zm250 0h1v2h-1zm37 0h1v2h-1zm-591 1h2v2h-2zm40 0h1v2h-1zm145 0h2v2h-2zm214 0h2v2h-2zm57 0h1v3h-1zm0 0h2v2h-2zm142 0h1v2h-1zm4 0h1v2h-1zm-453 1h1v3h-1zm83 0h1v3h-1zm15 0h1v2h-1zm18 0h1v2h-1zm-179 1h1v3h-1zm168 0h1v3h-1zm34 0h1v3h-1zm100 0h2v2h-2zm134 0h1v3h-1zm36 0h2v2h-2zm-411 1h2v2h-2zm136 0h2v2h-2zm39 0h2v3h-2zm7 0h1v3h-1zm93 0h1v2h-1zm76 0h1v2h-1zm101 0h2v2h-2zm-538 1h2v2h-2zm96 0h2v3h-2zm85 0h2v2h-2zm-201 1h1v2h-1zm146 0h1v2h-1zm242 0h2v3h-2zm18 0h2v2h-2zm-456 1h1v2h-1zm386 0h1v2h-1zm21 0h1v2h-1zm10 0h1v3h-1zm106 0h1v2h-1zm-450 1h2v2h-2zm143 0h1v2h-1zm240 0h1v2h-1zm-420 1h1v2h-1zm143 0h1v2h-1zm170 0h1v3h-1zm182 0h1v2h-1zm16 0h2v2h-2zm45 0h1v3h-1zm-506 1h1v2h-1zm78 0h1v2h-1zm149 0h2v3h-2zm48 0h2v2h-2zm87 0h1v2h-1zm-344 1h1v2h-1zm201 0h1v3h-1zm-171 1h1v2h-1zm395 0h2v2h-2zm17 0h1v2h-1zm96 0h2v2h-2zm-632 1h1v2h-1zm35 0h2v2h-2zm41 0h2v2h-2zm156 0h2v3h-2zm66 0h1v3h-1zm169 0h1v2h-1zm-457 1h1v2h-1zm472 0h1v2h-1zm-196 1h1v2h-1zm160 0h1v2h-1zm55 0h2v2h-2zm-264 1h2v2h-2zm275 0h2v2h-2zm-495 1h2v2h-2zm59 0h1v3h-1zm3 0h1v2h-1zm13 0h1v3h-1zm38 0h1v2h-1zm67 0h1v3h-1zm15 0h2v2h-2zm322 0h1v2h-1zm94 0h1v2h-1zm-611 1h2v2h-2zm17 0h1v2h-1zm40 0h1v2h-1zm204 0h2v3h-2zm20 0h1v2h-1zm76 0h1v3h-1zm42 0h1v2h-1zm75 0h1v2h-1zm-451 1h1v2h-1zm82 0h1v2h-1zm134 0h2v2h-2zm255 0h2v3h-2zm-201 1h1v2h-1zm158 0h1v2h-1zm-351 1h2v2h-2zm278 0h1v2h-1zm73 0h2v2h-2zm0 0h2v3h-2zm110 0h1v2h-1zm-555 1h1v3h-1zm27 0h1v2h-1zm148 0h1v3h-1zm35 0h1v2h-1zm-155 1h1v2h-1zm124 0h1v3h-1zm51 0h1v2h-1zm47 0h1v2h-1zm145 0h1v2h-1zm-247 1h1v2h-1zm129 0h1v3h-1zm187 0h1v2h-1zm-363 1h1v2h-1zm103 0h2v2h-2zm156 0h1v2h-1zm-353 1h1v2h-1zm41 0h1v2h-1zm99 0h2v2h-2zm94 0h1v3h-1zm57 0h1v2h-1zm16 0h2v2h-2zm265 0h2v3h-2zm-549 1h1v2h-1zm-37 1h2v2h-2zm11 0h1v2h-1zm75 0h2v3h-2zm94 0h2v2h-2zm56 0h2v2h-2zm70 0h1v3h-1zm14 0h1v3h-1zm71 0h1v2h-1zm71 0h1v3h-1zm-496 1h2v2h-2zm21 0h1v2h-1zm13 0h1v2h-1zm27 0h1v2h-1zm12 0h2v2h-2zm108 0h1v3h-1zm-179 1h1v3h-1zm8 0h1v2h-1zm14 0h2v2h-2zm184 0h2v2h-2zm66 1h1v2h-1zm37 0h1v2h-1zm7 0h2v3h-2zm31 0h1v2h-1zm73 0h2v3h-2zm-429 1h1v2h-1zm15 0h1v2h-1zm18 0h2v3h-2zm8 0h1v2h-1zm358 1h2v2h-2zm67 0h1v2h-1zm37 0h1v3h-1zm93 0h2v3h-2zm-599 1h1v2h-1zm375 0h1v2h-1zm52 0h2v2h-2zm189 0h1v2h-1zm-40 1h2v3h-2zm-570 1h1v2h-1zm363 0h1v2h-1zm69 0h2v3h-2zm39 0h1v2h-1zm81 0h1v2h-1zm-372 1h1v2h-1zm126 0h1v3h-1zm18 0h1v2h-1zm145 0h2v3h-2zm-227 1h1v3h-1zm21 0h1v3h-1zm-163 1h1v2h-1zm19 0h1v2h-1zm489 0h2v2h-2zm-608 2h1v2h-1zm70 0h1v3h-1zm76 0h1v2h-1zm11 0h1v2h-1zm72 0h1v2h-1zm71 0h1v2h-1zm-280 1h2v3h-2zm20 0h2v2h-2zm315 0h2v2h-2zm219 0h2v3h-2zm6 0h2v2h-2zm-570 1h1v3h-1zm13 0h2v2h-2zm7 0h1v2h-1zm9 0h1v2h-1zm127 0h1v3h-1zm304 0h2v3h-2zm-429 1h1v2h-1zm14 0h1v3h-1zm26 0h1v2h-1zm9 0h1v2h-1zm277 0h1v2h-1zm-371 1h1v2h-1zm125 0h1v2h-1zm182 0h1v3h-1zm199 0h1v2h-1zm-508 1h2v3h-2zm5 0h1v2h-1zm14 0h1v2h-1zm31 0h2v2h-2zm19 0h1v3h-1zm78 0h2v2h-2zm6 0h2v3h-2zm57 0h1v3h-1zm307 0h1v2h-1zm-523 1h1v3h-1zm115 0h1v2h-1zm12 0h1v3h-1zm14 0h1v2h-1zm30 0h2v2h-2zm26 0h1v2h-1zm101 0h2v2h-2zm251 0h1v2h-1zm-453 1h2v2h-2zm12 2h1v2h-1zm397 0h1v2h-1zm42 0h2v2h-2zm-531 1h2v2h-2zm12 0h1v3h-1zm11 0h1v2h-1zm57 0h1v2h-1zm105 0h1v3h-1zm75 0h2v3h-2zm270 0h1v2h-1zm-532 1h2v2h-2zm159 0h1v3h-1zm352 0h1v2h-1zm5 0h1v2h-1zm89 0h1v3h-1zm7 0h1v2h-1zm-629 1h2v2h-2zm192 0h1v2h-1zm28 0h1v3h-1zm116 0h1v2h-1zm257 0h1v3h-1zm-514 1h1v3h-1zm444 0h1v3h-1zm54 0h2v2h-2zm-355 1h2v2h-2zm43 0h2v3h-2zm47 0h1v2h-1zm29 0h1v2h-1zm-273 1h1v2h-1zm122 0h2v2h-2zm-39 1h2v3h-2zm224 0h1v2h-1zm11 0h2v2h-2zm-282 1h1v2h-1zm184 0h1v3h-1zm50 0h1v2h-1zm236 0h2v2h-2zm-137 1h1v3h-1zm97 0h2v2h-2zm12 0h1v2h-1zm-472 1h2v2h-2zm65 1h1v3h-1zm33 0h1v2h-1zm277 0h1v2h-1zm95 0h2v2h-2zm-544 1h2v2h-2zm70 0h1v2h-1zm40 0h1v3h-1zm54 0h1v2h-1zm247 0h1v2h-1zm46 0h1v2h-1zm-347 1h2v3h-2zm58 0h1v2h-1zm-170 1h1v2h-1zm120 0h2v2h-2zm99 0h1v2h-1zm1 0h1v2h-1zm138 0h1v2h-1zm26 0h1v3h-1zm222 0h2v2h-2zm-534 1h1v2h-1zm44 0h1v3h-1zm93 0h2v3h-2zm131 0h2v3h-2zm26 0h1v2h-1zm24 0h1v2h-1zm22 0h1v2h-1zm40 0h1v3h-1zm-452 1h1v3h-1zm72 0h2v3h-2zm77 0h1v3h-1zm44 0h2v2h-2zm340 0h1v2h-1zm33 0h1v2h-1zm-522 1h1v2h-1zm71 0h1v2h-1zm120 0h1v2h-1zm1 0h1v2h-1zm350 0h1v3h-1zm-194 1h1v2h-1zm73 0h2v2h-2zm60 0h1v2h-1zm88 0h1v2h-1zm-605 1h1v3h-1zm15 0h1v2h-1zm117 0h2v3h-2zm412 0h1v2h-1zm57 0h1v3h-1zm-454 1h2v3h-2zm85 0h1v3h-1zm14 0h1v3h-1zm60 0h1v3h-1zm158 0h1v2h-1zm115 0h2v3h-2zm-579 1h2v2h-2zm78 0h1v3h-1zm77 0h2v2h-2zm316 0h1v3h-1zm66 0h2v2h-2zm-458 1h2v2h-2zm516 0h1v3h-1zm-400 1h1v2h-1zm402 0h2v2h-2zm-503 1h1v2h-1zm11 0h1v3h-1zm126 0h1v3h-1zm67 0h1v2h-1zm133 0h2v3h-2zm88 0h2v2h-2zm-517 1h1v2h-1zm50 0h1v2h-1zm161 0h2v2h-2zm-218 1h1v3h-1zm138 0h2v2h-2zm47 0h2v2h-2zm103 0h2v2h-2zm-138 1h1v2h-1zm222 0h2v2h-2zm20 0h1v2h-1zm-348 1h1v2h-1zm542 0h1v2h-1zm8 0h1v2h-1zm-510 1h1v2h-1zm168 0h2v2h-2zm73 0h1v3h-1zm114 0h2v3h-2zm-282 1h1v2h-1zm4 0h1v2h-1zm15 0h1v3h-1zm247 0h2v2h-2zm70 0h1v2h-1zm-387 1h2v2h-2zm40 0h2v3h-2zm42 0h1v2h-1zm326 0h2v2h-2zm73 0h1v2h-1zm-325 1h1v2h-1zm220 0h1v2h-1zm56 0h2v2h-2zm80 0h2v2h-2zm-412 1h1v3h-1zm8 0h1v2h-1zm374 0h1v2h-1zm-563 1h2v2h-2zm34 0h2v2h-2zm135 0h1v2h-1zm158 0h1v3h-1zm191 0h1v3h-1zm43 0h1v2h-1zm-357 1h2v3h-2zm97 0h1v2h-1zm130 0h1v2h-1zm107 0h1v3h-1zm-340 1h1v2h-1zm175 0h2v2h-2zm-350 1h1v2h-1zm74 0h1v2h-1zm-47 1h2v2h-2zm85 0h1v2h-1zm192 0h1v2h-1zm-185 1h1v2h-1zm47 0h2v2h-2zm16 0h1v2h-1zm97 0h2v2h-2zm61 0h1v3h-1zm-384 1h1v2h-1zm141 1h1v2h-1zm257 0h2v2h-2zm3 0h1v3h-1zm90 0h1v3h-1zm-161 1h1v2h-1zm201 0h1v3h-1zm101 0h1v3h-1zm-509 1h1v2h-1zm483 0h1v3h-1zm27 0h1v3h-1zm-319 1h1v3h-1zm207 0h1v2h-1zm-156 1h1v3h-1zm141 0h1v2h-1zm31 0h1v2h-1zm31 0h1v2h-1zm-549 1h1v2h-1zm14 0h1v3h-1zm457 0h1v2h-1zm-419 1h1v2h-1zm50 0h2v2h-2zm86 0h1v2h-1zm67 0h1v2h-1zm218 0h1v3h-1zm-485 1h1v2h-1zm196 0h1v2h-1zm11 0h1v2h-1zm188 0h1v2h-1zm41 0h1v2h-1zm-353 1h1v2h-1zm21 0h1v3h-1zm237 0h1v2h-1zm133 0h2v2h-2zm-478 1h1v2h-1zm6 0h2v2h-2zm235 0h2v2h-2zm183 0h1v2h-1zm-348 1h1v2h-1zm169 0h1v2h-1zm42 0h2v2h-2zm-248 1h2v2h-2zm49 0h1v2h-1zm114 0h2v2h-2zm296 0h1v3h-1zm17 0h1v3h-1zm28 0h2v2h-2zm-539 1h1v2h-1zm114 0h2v2h-2zm72 0h1v3h-1zm-186 1h1v3h-1zm499 0h1v3h-1zm-510 1h1v2h-1zm164 0h2v3h-2zm-21 1h2v2h-2zm163 0h2v3h-2zm51 0h2v2h-2zm235 0h1v3h-1zm-576 1h1v2h-1zm16 0h2v3h-2zm191 0h2v2h-2zm396 0h1v2h-1zm-94 1h2v2h-2zm23 0h1v2h-1zm-428 1h1v2h-1zm41 0h2v2h-2zm18 0h2v2h-2zm87 0h2v2h-2zm141 0h1v2h-1zm133 0h1v2h-1zm-493 1h1v2h-1zm2 0h2v3h-2zm193 0h1v2h-1zm60 0h1v3h-1zm6 0h1v3h-1zm247 0h1v2h-1zm-459 1h2v3h-2zm41 0h2v3h-2zm69 0h2v3h-2zm59 0h2v3h-2zm72 0h2v2h-2zm207 0h1v2h-1zm-487 1h1v2h-1zm18 0h1v2h-1zm73 0h1v2h-1zm25 0h2v2h-2zm40 0h1v3h-1zm160 0h2v2h-2zm101 0h2v2h-2zm46 0h2v3h-2zm-495 1h2v3h-2zm168 0h2v3h-2zm126 0h1v2h-1zm47 0h2v3h-2zm23 0h2v2h-2zm126 0h1v2h-1zm22 0h1v2h-1zm-513 1h1v3h-1zm503 0h1v2h-1zm112 0h1v2h-1zm-619 2h1v2h-1zm142 0h1v2h-1zm238 0h1v2h-1zm-389 1h1v2h-1zm47 0h2v3h-2zm512 0h1v2h-1zm-492 1h1v3h-1zm122 0h2v2h-2zm69 0h1v3h-1zm12 0h1v2h-1zm288 0h1v2h-1zm-411 1h1v2h-1zm391 0h2v2h-2zm-274 1h1v2h-1zm373 0h1v2h-1zm-547 1h1v2h-1zm131 0h2v3h-2zm15 0h1v2h-1zm97 0h1v2h-1zm-287 1h2v2h-2zm116 0h2v3h-2zm-117 1h2v2h-2zm16 0h1v2h-1zm65 0h2v2h-2zm61 0h1v2h-1zm15 0h1v2h-1zm116 0h2v2h-2zm137 0h1v2h-1zm-337 1h2v3h-2zm150 0h1v2h-1zm45 0h1v2h-1zm16 0h2v2h-2zm289 0h2v3h-2zm-168 1h1v2h-1zm2 0h1v2h-1zm142 0h1v2h-1zm-599 1h2v2h-2zm84 0h1v2h-1zm28 0h1v2h-1zm122 0h1v3h-1zm128 0h1v2h-1zm61 0h2v3h-2zm126 0h1v2h-1zm-375 1h2v3h-2zm127 0h1v2h-1zm122 0h1v2h-1zm17 0h2v2h-2zm-381 1h1v3h-1zm41 0h1v2h-1zm164 0h1v2h-1zm52 0h1v2h-1zm34 0h1v3h-1zm-206 1h2v2h-2zm78 0h1v2h-1zm89 0h1v2h-1zm75 0h1v2h-1zm-363 1h2v3h-2zm30 0h1v2h-1zm10 0h1v2h-1zm2 0h1v2h-1zm16 0h2v2h-2zm51 0h1v2h-1zm-78 1h1v2h-1zm149 0h1v3h-1zm151 0h2v2h-2zm148 0h2v2h-2zm-357 1h1v2h-1zm73 2h2v3h-2zm117 0h2v2h-2zm60 0h1v3h-1zm26 0h1v3h-1zm100 0h1v2h-1zm-501 1h1v2h-1zm79 0h1v2h-1zm413 0h1v2h-1zm61 0h1v2h-1zm-561 1h1v2h-1zm213 0h1v2h-1zm266 0h1v3h-1zm123 0h2v2h-2zm-356 1h1v2h-1zm131 0h2v3h-2z"/></g></svg></div><div class="a" style="left:467px;top:13px;width:5px;height:407px;background:#262626"></div><div class="a" style="left:1111px;top:13px;width:10px;height:407px;background:#2a2a2a"></div><div class="a" style="left:467px;top:419px;width:654px;height:2px;background:#f2f2b0"></div><svg class="a" style="left:643px;top:155px" width="22" height="22"><rect x="1" y="1" width="20" height="20" fill="none" stroke="#c8c83c" stroke-width="1.3"/><path d="M1 1 L21 21 M21 1 L1 21" stroke="#d8d880" stroke-width="1"/></svg><svg class="a" style="left:781px;top:156px" width="23" height="21"><rect x="1" y="1" width="21" height="19" fill="none" stroke="#b02828" stroke-width="1.3"/><path d="M1 1 L22 20 M22 1 L1 20" stroke="#c8c850" stroke-width="1"/></svg><svg class="a" style="left:815px;top:157px" width="22" height="22"><rect x="1" y="1" width="20" height="20" fill="none" stroke="#30b830" stroke-width="1.3"/><path d="M1 1 L21 21 M21 1 L1 21" stroke="#c8c850" stroke-width="1"/></svg><svg class="a" style="left:911px;top:139px" width="22" height="22"><rect x="1" y="1" width="20" height="20" fill="none" stroke="#c8c83c" stroke-width="1.3"/><path d="M1 1 L21 21 M21 1 L1 21" stroke="#d8d880" stroke-width="1"/></svg><div class="a" style="left:513.0px;top:319.5px;width:21.5px;text-align:center;font:bold 33px/33px 'Liberation Sans',sans-serif;letter-spacing:0;color:#fff;font-weight:normal;-webkit-text-stroke:1.3px #fff;text-shadow:1px 1px 1px #000,-1px -1px 1px #000,1px -1px 1px #000,-1px 1px 1px #000">F</div><div class="a" style="left:534.5px;top:319.5px;width:21.5px;text-align:center;font:bold 33px/33px 'Liberation Sans',sans-serif;letter-spacing:0;color:#fff;font-weight:normal;-webkit-text-stroke:1.3px #fff;text-shadow:1px 1px 1px #000,-1px -1px 1px #000,1px -1px 1px #000,-1px 1px 1px #000">8</div><div class="a" style="left:535.0px;top:351.3px;width:21.8px;text-align:center;font:bold 36px/36px 'Liberation Sans',sans-serif;letter-spacing:0;color:#fff;font-weight:normal;-webkit-text-stroke:1.3px #fff;text-shadow:1px 1px 1px #000,-1px -1px 1px #000,1px -1px 1px #000,-1px 1px 1px #000">0</div><div class="a" style="left:556.8px;top:351.3px;width:21.8px;text-align:center;font:bold 36px/36px 'Liberation Sans',sans-serif;letter-spacing:0;color:#fff;font-weight:normal;-webkit-text-stroke:1.3px #fff;text-shadow:1px 1px 1px #000,-1px -1px 1px #000,1px -1px 1px #000,-1px 1px 1px #000">6</div><div class="a" style="left:578.6px;top:351.3px;width:21.8px;text-align:center;font:bold 36px/36px 'Liberation Sans',sans-serif;letter-spacing:0;color:#fff;font-weight:normal;-webkit-text-stroke:1.3px #fff;text-shadow:1px 1px 1px #000,-1px -1px 1px #000,1px -1px 1px #000,-1px 1px 1px #000">:</div><div class="a" style="left:600.4px;top:351.3px;width:21.8px;text-align:center;font:bold 36px/36px 'Liberation Sans',sans-serif;letter-spacing:0;color:#fff;font-weight:normal;-webkit-text-stroke:1.3px #fff;text-shadow:1px 1px 1px #000,-1px -1px 1px #000,1px -1px 1px #000,-1px 1px 1px #000">2</div><div class="a" style="left:622.2px;top:351.3px;width:21.8px;text-align:center;font:bold 36px/36px 'Liberation Sans',sans-serif;letter-spacing:0;color:#fff;font-weight:normal;-webkit-text-stroke:1.3px #fff;text-shadow:1px 1px 1px #000,-1px -1px 1px #000,1px -1px 1px #000,-1px 1px 1px #000">6</div><div class="a" style="left:644.0px;top:351.3px;width:21.8px;text-align:center;font:bold 36px/36px 'Liberation Sans',sans-serif;letter-spacing:0;color:#fff;font-weight:normal;-webkit-text-stroke:1.3px #fff;text-shadow:1px 1px 1px #000,-1px -1px 1px #000,1px -1px 1px #000,-1px 1px 1px #000">:</div><div class="a" style="left:665.8px;top:351.3px;width:21.8px;text-align:center;font:bold 36px/36px 'Liberation Sans',sans-serif;letter-spacing:0;color:#fff;font-weight:normal;-webkit-text-stroke:1.3px #fff;text-shadow:1px 1px 1px #000,-1px -1px 1px #000,1px -1px 1px #000,-1px 1px 1px #000">0</div><div class="a" style="left:687.6px;top:351.3px;width:21.8px;text-align:center;font:bold 36px/36px 'Liberation Sans',sans-serif;letter-spacing:0;color:#fff;font-weight:normal;-webkit-text-stroke:1.3px #fff;text-shadow:1px 1px 1px #000,-1px -1px 1px #000,1px -1px 1px #000,-1px 1px 1px #000">3</div><div class="a" style="left:731.2px;top:351.3px;width:21.8px;text-align:center;font:bold 36px/36px 'Liberation Sans',sans-serif;letter-spacing:0;color:transparent;background:repeating-linear-gradient(#e4e4e4 0 2px,#6a6a6a 2px 3px);-webkit-background-clip:text;background-clip:text;font-weight:normal;-webkit-text-stroke:1px rgba(0,0,0,0)">3</div><div class="a" style="left:753.0px;top:351.3px;width:21.8px;text-align:center;font:bold 36px/36px 'Liberation Sans',sans-serif;letter-spacing:0;color:transparent;background:repeating-linear-gradient(#e4e4e4 0 2px,#6a6a6a 2px 3px);-webkit-background-clip:text;background-clip:text;font-weight:normal;-webkit-text-stroke:1px rgba(0,0,0,0)">9</div><div class="a" style="left:774.8px;top:351.3px;width:21.8px;text-align:center;font:bold 36px/36px 'Liberation Sans',sans-serif;letter-spacing:0;color:transparent;background:repeating-linear-gradient(#e4e4e4 0 2px,#6a6a6a 2px 3px);-webkit-background-clip:text;background-clip:text;font-weight:normal;-webkit-text-stroke:1px rgba(0,0,0,0)">7</div><div class="a" style="left:796.6px;top:351.3px;width:21.8px;text-align:center;font:bold 36px/36px 'Liberation Sans',sans-serif;letter-spacing:0;color:transparent;background:repeating-linear-gradient(#e4e4e4 0 2px,#6a6a6a 2px 3px);-webkit-background-clip:text;background-clip:text;font-weight:normal;-webkit-text-stroke:1px rgba(0,0,0,0)">7</div><div class="a" style="left:840.2px;top:351.3px;width:21.8px;text-align:center;font:bold 36px/36px 'Liberation Sans',sans-serif;letter-spacing:0;color:transparent;background:repeating-linear-gradient(#e4e4e4 0 2px,#6a6a6a 2px 3px);-webkit-background-clip:text;background-clip:text;font-weight:normal;-webkit-text-stroke:1px rgba(0,0,0,0)">4</div><div class="a" style="left:862.0px;top:351.3px;width:21.8px;text-align:center;font:bold 36px/36px 'Liberation Sans',sans-serif;letter-spacing:0;color:transparent;background:repeating-linear-gradient(#e4e4e4 0 2px,#6a6a6a 2px 3px);-webkit-background-clip:text;background-clip:text;font-weight:normal;-webkit-text-stroke:1px rgba(0,0,0,0)">1</div><div class="a" style="left:883.8px;top:351.3px;width:21.8px;text-align:center;font:bold 36px/36px 'Liberation Sans',sans-serif;letter-spacing:0;color:transparent;background:repeating-linear-gradient(#e4e4e4 0 2px,#6a6a6a 2px 3px);-webkit-background-clip:text;background-clip:text;font-weight:normal;-webkit-text-stroke:1px rgba(0,0,0,0)">7</div><div class="a" style="left:905.6px;top:351.3px;width:21.8px;text-align:center;font:bold 36px/36px 'Liberation Sans',sans-serif;letter-spacing:0;color:transparent;background:repeating-linear-gradient(#e4e4e4 0 2px,#6a6a6a 2px 3px);-webkit-background-clip:text;background-clip:text;font-weight:normal;-webkit-text-stroke:1px rgba(0,0,0,0)">7</div><div class="a" style="left:949.2px;top:351.3px;width:21.8px;text-align:center;font:bold 36px/36px 'Liberation Sans',sans-serif;letter-spacing:0;color:#fff;font-weight:normal;-webkit-text-stroke:1.3px #fff;text-shadow:1px 1px 1px #000,-1px -1px 1px #000,1px -1px 1px #000,-1px 1px 1px #000">2</div><div class="a" style="left:971.0px;top:351.3px;width:21.8px;text-align:center;font:bold 36px/36px 'Liberation Sans',sans-serif;letter-spacing:0;color:#fff;font-weight:normal;-webkit-text-stroke:1.3px #fff;text-shadow:1px 1px 1px #000,-1px -1px 1px #000,1px -1px 1px #000,-1px 1px 1px #000">9</div><div class="a" style="left:992.8px;top:351.3px;width:21.8px;text-align:center;font:bold 36px/36px 'Liberation Sans',sans-serif;letter-spacing:0;color:#fff;font-weight:normal;-webkit-text-stroke:1.3px #fff;text-shadow:1px 1px 1px #000,-1px -1px 1px #000,1px -1px 1px #000,-1px 1px 1px #000">6</div><div class="a" style="left:1014.6px;top:351.3px;width:21.8px;text-align:center;font:bold 36px/36px 'Liberation Sans',sans-serif;letter-spacing:0;color:#fff;font-weight:normal;-webkit-text-stroke:1.3px #fff;text-shadow:1px 1px 1px #000,-1px -1px 1px #000,1px -1px 1px #000,-1px 1px 1px #000">2</div><div class="a" style="left:1036.4px;top:351.3px;width:21.8px;text-align:center;font:bold 36px/36px 'Liberation Sans',sans-serif;letter-spacing:0;color:#fff;font-weight:normal;-webkit-text-stroke:1.3px #fff;text-shadow:1px 1px 1px #000,-1px -1px 1px #000,1px -1px 1px #000,-1px 1px 1px #000">8</div><div class="a" style="left:0px;top:487px;width:318px;height:145px;background:#fff"></div><div class="a" style="left:306px;top:487px;width:12px;height:145px;background:#f0f0f0"></div><div class="a" style="left:306px;top:487px;width:12px;height:13px;background:#f0f0f0;border:1px solid #d4d4d4"></div><svg class="a" style="left:307px;top:490px" width="10" height="7"><path d="M1.5 5.5 L5 2 L8.5 5.5z" fill="#333"/></svg><div class="t mono" style="left:-7.5px;top:485.4px;font-size:9.25px;white-space:pre;color:#1a1a1a;font-weight:normal;-webkit-text-stroke:0.45px #1a1a1a">fo:[06:26:03.4977]  time:23163.4977  scores:96 94 96 95</div><div class="t mono" style="left:-7.5px;top:496.4px;font-size:9.25px;white-space:pre;color:#1a1a1a;font-weight:normal;-webkit-text-stroke:0.45px #1a1a1a">  93 88 88       4816</div><div class="t mono" style="left:-7.5px;top:518.4px;font-size:9.25px;white-space:pre;color:#1a1a1a;font-weight:normal;-webkit-text-stroke:0.45px #1a1a1a">fo:[06:26:03.4977]</div><div class="t mono" style="left:-7.5px;top:529.4px;font-size:9.25px;white-space:pre;color:#1a1a1a;font-weight:normal;-webkit-text-stroke:0.45px #1a1a1a">  16</div><div class="t mono" style="left:-7.5px;top:540.4px;font-size:9.25px;white-space:pre;color:#1a1a1a;font-weight:normal;-webkit-text-stroke:0.45px #1a1a1a">fo:[</div><div class="t mono" style="left:-7.5px;top:551.4px;font-size:9.25px;white-space:pre;color:#1a1a1a;font-weight:normal;-webkit-text-stroke:0.45px #1a1a1a">  97</div><div class="t mono" style="left:-7.5px;top:573.4px;font-size:9.25px;white-space:pre;color:#1a1a1a;font-weight:normal;-webkit-text-stroke:0.45px #1a1a1a">fo:[</div><div class="t mono" style="left:-7.5px;top:584.4px;font-size:9.25px;white-space:pre;color:#1a1a1a;font-weight:normal;-webkit-text-stroke:0.45px #1a1a1a">  18</div><div class="t mono" style="left:-7.5px;top:595.4px;font-size:9.25px;white-space:pre;color:#1a1a1a;font-weight:normal;-webkit-text-stroke:0.45px #1a1a1a">fo:[</div><div class="t mono" style="left:-7.5px;top:606.4px;font-size:9.25px;white-space:pre;color:#1a1a1a;font-weight:normal;-webkit-text-stroke:0.45px #1a1a1a">  97</div><svg class="a" style="left:455px;top:484px" width="153" height="153"><g transform="translate(13 13)" shape-rendering="crispEdges"><rect x="0.00" y="0.00" width="6.35" height="6.35" fill="#141414"/><rect x="6.05" y="0.00" width="6.35" height="6.35" fill="#0c0c0c"/><rect x="12.10" y="0.00" width="6.35" height="6.35" fill="#0a0a0a"/><rect x="18.14" y="0.00" width="6.35" height="6.35" fill="#0a0a0a"/><rect x="24.19" y="0.00" width="6.35" height="6.35" fill="#0f0f0f"/><rect x="30.24" y="0.00" width="6.35" height="6.35" fill="#111111"/><rect x="36.29" y="0.00" width="6.35" height="6.35" fill="#070707"/><rect x="42.33" y="0.00" width="6.35" height="6.35" fill="#444444"/><rect x="48.38" y="0.00" width="6.35" height="6.35" fill="#0a0a0a"/><rect x="54.43" y="0.00" width="6.35" height="6.35" fill="#0c0c0c"/><rect x="60.48" y="0.00" width="6.35" height="6.35" fill="#161616"/><rect x="66.52" y="0.00" width="6.35" height="6.35" fill="#111111"/><rect x="72.57" y="0.00" width="6.35" height="6.35" fill="#070707"/><rect x="78.62" y="0.00" width="6.35" height="6.35" fill="#080808"/><rect x="84.67" y="0.00" width="6.35" height="6.35" fill="#0e0e0e"/><rect x="90.71" y="0.00" width="6.35" height="6.35" fill="#111111"/><rect x="96.76" y="0.00" width="6.35" height="6.35" fill="#0d0d0d"/><rect x="102.81" y="0.00" width="6.35" height="6.35" fill="#080808"/><rect x="108.86" y="0.00" width="6.35" height="6.35" fill="#0b0b0b"/><rect x="114.90" y="0.00" width="6.35" height="6.35" fill="#111111"/><rect x="120.95" y="0.00" width="6.35" height="6.35" fill="#070707"/><rect x="0.00" y="6.05" width="6.35" height="6.35" fill="#141414"/><rect x="6.05" y="6.05" width="6.35" height="6.35" fill="#333333"/><rect x="12.10" y="6.05" width="6.35" height="6.35" fill="#333333"/><rect x="18.14" y="6.05" width="6.35" height="6.35" fill="#0a0a0a"/><rect x="24.19" y="6.05" width="6.35" height="6.35" fill="#0c0c0c"/><rect x="30.24" y="6.05" width="6.35" height="6.35" fill="#111111"/><rect x="36.29" y="6.05" width="6.35" height="6.35" fill="#0a0a0a"/><rect x="42.33" y="6.05" width="6.35" height="6.35" fill="#3d3d3d"/><rect x="48.38" y="6.05" width="6.35" height="6.35" fill="#0c0c0c"/><rect x="54.43" y="6.05" width="6.35" height="6.35" fill="#0c0c0c"/><rect x="60.48" y="6.05" width="6.35" height="6.35" fill="#0f0f0f"/><rect x="66.52" y="6.05" width="6.35" height="6.35" fill="#0d0d0d"/><rect x="72.57" y="6.05" width="6.35" height="6.35" fill="#0a0a0a"/><rect x="78.62" y="6.05" width="6.35" height="6.35" fill="#111111"/><rect x="84.67" y="6.05" width="6.35" height="6.35" fill="#0b0b0b"/><rect x="90.71" y="6.05" width="6.35" height="6.35" fill="#252525"/><rect x="96.76" y="6.05" width="6.35" height="6.35" fill="#2f2f2f"/><rect x="102.81" y="6.05" width="6.35" height="6.35" fill="#111111"/><rect x="108.86" y="6.05" width="6.35" height="6.35" fill="#080808"/><rect x="114.90" y="6.05" width="6.35" height="6.35" fill="#0d0d0d"/><rect x="120.95" y="6.05" width="6.35" height="6.35" fill="#0b0b0b"/><rect x="0.00" y="12.10" width="6.35" height="6.35" fill="#0b0b0b"/><rect x="6.05" y="12.10" width="6.35" height="6.35" fill="#272727"/><rect x="12.10" y="12.10" width="6.35" height="6.35" fill="#191919"/><rect x="18.14" y="12.10" width="6.35" height="6.35" fill="#0b0b0b"/><rect x="24.19" y="12.10" width="6.35" height="6.35" fill="#0d0d0d"/><rect x="30.24" y="12.10" width="6.35" height="6.35" fill="#161616"/><rect x="36.29" y="12.10" width="6.35" height="6.35" fill="#080808"/><rect x="42.33" y="12.10" width="6.35" height="6.35" fill="#4a4a4a"/><rect x="48.38" y="12.10" width="6.35" height="6.35" fill="#0e0e0e"/><rect x="54.43" y="12.10" width="6.35" height="6.35" fill="#0c0c0c"/><rect x="60.48" y="12.10" width="6.35" height="6.35" fill="#0c0c0c"/><rect x="66.52" y="12.10" width="6.35" height="6.35" fill="#0c0c0c"/><rect x="72.57" y="12.10" width="6.35" height="6.35" fill="#070707"/><rect x="78.62" y="12.10" width="6.35" height="6.35" fill="#0a0a0a"/><rect x="84.67" y="12.10" width="6.35" height="6.35" fill="#111111"/><rect x="90.71" y="12.10" width="6.35" height="6.35" fill="#2f2f2f"/><rect x="96.76" y="12.10" width="6.35" height="6.35" fill="#2f2f2f"/><rect x="102.81" y="12.10" width="6.35" height="6.35" fill="#111111"/><rect x="108.86" y="12.10" width="6.35" height="6.35" fill="#111111"/><rect x="114.90" y="12.10" width="6.35" height="6.35" fill="#0d0d0d"/><rect x="120.95" y="12.10" width="6.35" height="6.35" fill="#080808"/><rect x="0.00" y="18.14" width="6.35" height="6.35" fill="#0a0a0a"/><rect x="6.05" y="18.14" width="6.35" height="6.35" fill="#272727"/><rect x="12.10" y="18.14" width="6.35" height="6.35" fill="#2f2f2f"/><rect x="18.14" y="18.14" width="6.35" height="6.35" fill="#0a0a0a"/><rect x="24.19" y="18.14" width="6.35" height="6.35" fill="#0c0c0c"/><rect x="30.24" y="18.14" width="6.35" height="6.35" fill="#0c0c0c"/><rect x="36.29" y="18.14" width="6.35" height="6.35" fill="#0e0e0e"/><rect x="42.33" y="18.14" width="6.35" height="6.35" fill="#515151"/><rect x="48.38" y="18.14" width="6.35" height="6.35" fill="#0a0a0a"/><rect x="54.43" y="18.14" width="6.35" height="6.35" fill="#0c0c0c"/><rect x="60.48" y="18.14" width="6.35" height="6.35" fill="#111111"/><rect x="66.52" y="18.14" width="6.35" height="6.35" fill="#0c0c0c"/><rect x="72.57" y="18.14" width="6.35" height="6.35" fill="#0a0a0a"/><rect x="78.62" y="18.14" width="6.35" height="6.35" fill="#070707"/><rect x="84.67" y="18.14" width="6.35" height="6.35" fill="#0b0b0b"/><rect x="90.71" y="18.14" width="6.35" height="6.35" fill="#2f2f2f"/><rect x="96.76" y="18.14" width="6.35" height="6.35" fill="#393939"/><rect x="102.81" y="18.14" width="6.35" height="6.35" fill="#070707"/><rect x="108.86" y="18.14" width="6.35" height="6.35" fill="#070707"/><rect x="114.90" y="18.14" width="6.35" height="6.35" fill="#0d0d0d"/><rect x="120.95" y="18.14" width="6.35" height="6.35" fill="#070707"/><rect x="0.00" y="24.19" width="6.35" height="6.35" fill="#141414"/><rect x="6.05" y="24.19" width="6.35" height="6.35" fill="#0d0d0d"/><rect x="12.10" y="24.19" width="6.35" height="6.35" fill="#0a0a0a"/><rect x="18.14" y="24.19" width="6.35" height="6.35" fill="#0a0a0a"/><rect x="24.19" y="24.19" width="6.35" height="6.35" fill="#131313"/><rect x="30.24" y="24.19" width="6.35" height="6.35" fill="#161616"/><rect x="36.29" y="24.19" width="6.35" height="6.35" fill="#0a0a0a"/><rect x="42.33" y="24.19" width="6.35" height="6.35" fill="#666666"/><rect x="48.38" y="24.19" width="6.35" height="6.35" fill="#0a0a0a"/><rect x="54.43" y="24.19" width="6.35" height="6.35" fill="#0c0c0c"/><rect x="60.48" y="24.19" width="6.35" height="6.35" fill="#0f0f0f"/><rect x="66.52" y="24.19" width="6.35" height="6.35" fill="#161616"/><rect x="72.57" y="24.19" width="6.35" height="6.35" fill="#0b0b0b"/><rect x="78.62" y="24.19" width="6.35" height="6.35" fill="#070707"/><rect x="84.67" y="24.19" width="6.35" height="6.35" fill="#080808"/><rect x="90.71" y="24.19" width="6.35" height="6.35" fill="#0e0e0e"/><rect x="96.76" y="24.19" width="6.35" height="6.35" fill="#161616"/><rect x="102.81" y="24.19" width="6.35" height="6.35" fill="#0b0b0b"/><rect x="108.86" y="24.19" width="6.35" height="6.35" fill="#313131"/><rect x="114.90" y="24.19" width="6.35" height="6.35" fill="#3f3f3f"/><rect x="120.95" y="24.19" width="6.35" height="6.35" fill="#111111"/><rect x="0.00" y="30.24" width="6.35" height="6.35" fill="#0a0a0a"/><rect x="6.05" y="30.24" width="6.35" height="6.35" fill="#0d0d0d"/><rect x="12.10" y="30.24" width="6.35" height="6.35" fill="#0a0a0a"/><rect x="18.14" y="30.24" width="6.35" height="6.35" fill="#0a0a0a"/><rect x="24.19" y="30.24" width="6.35" height="6.35" fill="#0c0c0c"/><rect x="30.24" y="30.24" width="6.35" height="6.35" fill="#0c0c0c"/><rect x="36.29" y="30.24" width="6.35" height="6.35" fill="#0e0e0e"/><rect x="42.33" y="30.24" width="6.35" height="6.35" fill="#515151"/><rect x="48.38" y="30.24" width="6.35" height="6.35" fill="#0a0a0a"/><rect x="54.43" y="30.24" width="6.35" height="6.35" fill="#0f0f0f"/><rect x="60.48" y="30.24" width="6.35" height="6.35" fill="#0c0c0c"/><rect x="66.52" y="30.24" width="6.35" height="6.35" fill="#111111"/><rect x="72.57" y="30.24" width="6.35" height="6.35" fill="#0a0a0a"/><rect x="78.62" y="30.24" width="6.35" height="6.35" fill="#111111"/><rect x="84.67" y="30.24" width="6.35" height="6.35" fill="#070707"/><rect x="90.71" y="30.24" width="6.35" height="6.35" fill="#070707"/><rect x="96.76" y="30.24" width="6.35" height="6.35" fill="#0d0d0d"/><rect x="102.81" y="30.24" width="6.35" height="6.35" fill="#0e0e0e"/><rect x="108.86" y="30.24" width="6.35" height="6.35" fill="#282828"/><rect x="114.90" y="30.24" width="6.35" height="6.35" fill="#282828"/><rect x="120.95" y="30.24" width="6.35" height="6.35" fill="#070707"/><rect x="0.00" y="36.29" width="6.35" height="6.35" fill="#0a0a0a"/><rect x="6.05" y="36.29" width="6.35" height="6.35" fill="#0f0f0f"/><rect x="12.10" y="36.29" width="6.35" height="6.35" fill="#0b0b0b"/><rect x="18.14" y="36.29" width="6.35" height="6.35" fill="#141414"/><rect x="24.19" y="36.29" width="6.35" height="6.35" fill="#191919"/><rect x="30.24" y="36.29" width="6.35" height="6.35" fill="#131313"/><rect x="36.29" y="36.29" width="6.35" height="6.35" fill="#111111"/><rect x="42.33" y="36.29" width="6.35" height="6.35" fill="#0a0a0a"/><rect x="48.38" y="36.29" width="6.35" height="6.35" fill="#141414"/><rect x="54.43" y="36.29" width="6.35" height="6.35" fill="#131313"/><rect x="60.48" y="36.29" width="6.35" height="6.35" fill="#3b3b3b"/><rect x="66.52" y="36.29" width="6.35" height="6.35" fill="#0c0c0c"/><rect x="72.57" y="36.29" width="6.35" height="6.35" fill="#070707"/><rect x="78.62" y="36.29" width="6.35" height="6.35" fill="#070707"/><rect x="84.67" y="36.29" width="6.35" height="6.35" fill="#070707"/><rect x="90.71" y="36.29" width="6.35" height="6.35" fill="#070707"/><rect x="96.76" y="36.29" width="6.35" height="6.35" fill="#131313"/><rect x="102.81" y="36.29" width="6.35" height="6.35" fill="#111111"/><rect x="108.86" y="36.29" width="6.35" height="6.35" fill="#0a0a0a"/><rect x="114.90" y="36.29" width="6.35" height="6.35" fill="#0d0d0d"/><rect x="120.95" y="36.29" width="6.35" height="6.35" fill="#070707"/><rect x="0.00" y="42.33" width="6.35" height="6.35" fill="#141414"/><rect x="6.05" y="42.33" width="6.35" height="6.35" fill="#161616"/><rect x="12.10" y="42.33" width="6.35" height="6.35" fill="#0b0b0b"/><rect x="18.14" y="42.33" width="6.35" height="6.35" fill="#141414"/><rect x="24.19" y="42.33" width="6.35" height="6.35" fill="#0c0c0c"/><rect x="30.24" y="42.33" width="6.35" height="6.35" fill="#0c0c0c"/><rect x="36.29" y="42.33" width="6.35" height="6.35" fill="#0a0a0a"/><rect x="42.33" y="42.33" width="6.35" height="6.35" fill="#0a0a0a"/><rect x="48.38" y="42.33" width="6.35" height="6.35" fill="#0e0e0e"/><rect x="54.43" y="42.33" width="6.35" height="6.35" fill="#111111"/><rect x="60.48" y="42.33" width="6.35" height="6.35" fill="#2f2f2f"/><rect x="66.52" y="42.33" width="6.35" height="6.35" fill="#0c0c0c"/><rect x="72.57" y="42.33" width="6.35" height="6.35" fill="#070707"/><rect x="78.62" y="42.33" width="6.35" height="6.35" fill="#070707"/><rect x="84.67" y="42.33" width="6.35" height="6.35" fill="#080808"/><rect x="90.71" y="42.33" width="6.35" height="6.35" fill="#0b0b0b"/><rect x="96.76" y="42.33" width="6.35" height="6.35" fill="#0c0c0c"/><rect x="102.81" y="42.33" width="6.35" height="6.35" fill="#0b0b0b"/><rect x="108.86" y="42.33" width="6.35" height="6.35" fill="#080808"/><rect x="114.90" y="42.33" width="6.35" height="6.35" fill="#0c0c0c"/><rect x="120.95" y="42.33" width="6.35" height="6.35" fill="#070707"/><rect x="0.00" y="48.38" width="6.35" height="6.35" fill="#0c0c0c"/><rect x="6.05" y="48.38" width="6.35" height="6.35" fill="#0c0c0c"/><rect x="12.10" y="48.38" width="6.35" height="6.35" fill="#0a0a0a"/><rect x="18.14" y="48.38" width="6.35" height="6.35" fill="#0a0a0a"/><rect x="24.19" y="48.38" width="6.35" height="6.35" fill="#0d0d0d"/><rect x="30.24" y="48.38" width="6.35" height="6.35" fill="#0c0c0c"/><rect x="36.29" y="48.38" width="6.35" height="6.35" fill="#070707"/><rect x="42.33" y="48.38" width="6.35" height="6.35" fill="#0e0e0e"/><rect x="48.38" y="48.38" width="6.35" height="6.35" fill="#0a0a0a"/><rect x="54.43" y="48.38" width="6.35" height="6.35" fill="#131313"/><rect x="60.48" y="48.38" width="6.35" height="6.35" fill="#515151"/><rect x="66.52" y="48.38" width="6.35" height="6.35" fill="#0f0f0f"/><rect x="72.57" y="48.38" width="6.35" height="6.35" fill="#0e0e0e"/><rect x="78.62" y="48.38" width="6.35" height="6.35" fill="#585858"/><rect x="84.67" y="48.38" width="6.35" height="6.35" fill="#080808"/><rect x="90.71" y="48.38" width="6.35" height="6.35" fill="#212121"/><rect x="96.76" y="48.38" width="6.35" height="6.35" fill="#212121"/><rect x="102.81" y="48.38" width="6.35" height="6.35" fill="#070707"/><rect x="108.86" y="48.38" width="6.35" height="6.35" fill="#0e0e0e"/><rect x="114.90" y="48.38" width="6.35" height="6.35" fill="#0c0c0c"/><rect x="120.95" y="48.38" width="6.35" height="6.35" fill="#111111"/><rect x="0.00" y="54.43" width="6.35" height="6.35" fill="#0a0a0a"/><rect x="6.05" y="54.43" width="6.35" height="6.35" fill="#1c1c1c"/><rect x="12.10" y="54.43" width="6.35" height="6.35" fill="#141414"/><rect x="18.14" y="54.43" width="6.35" height="6.35" fill="#0b0b0b"/><rect x="24.19" y="54.43" width="6.35" height="6.35" fill="#161616"/><rect x="30.24" y="54.43" width="6.35" height="6.35" fill="#0f0f0f"/><rect x="36.29" y="54.43" width="6.35" height="6.35" fill="#070707"/><rect x="42.33" y="54.43" width="6.35" height="6.35" fill="#0a0a0a"/><rect x="48.38" y="54.43" width="6.35" height="6.35" fill="#0a0a0a"/><rect x="54.43" y="54.43" width="6.35" height="6.35" fill="#161616"/><rect x="60.48" y="54.43" width="6.35" height="6.35" fill="#959595"/><rect x="66.52" y="54.43" width="6.35" height="6.35" fill="#0c0c0c"/><rect x="72.57" y="54.43" width="6.35" height="6.35" fill="#111111"/><rect x="78.62" y="54.43" width="6.35" height="6.35" fill="#3d3d3d"/><rect x="84.67" y="54.43" width="6.35" height="6.35" fill="#0e0e0e"/><rect x="90.71" y="54.43" width="6.35" height="6.35" fill="#111111"/><rect x="96.76" y="54.43" width="6.35" height="6.35" fill="#131313"/><rect x="102.81" y="54.43" width="6.35" height="6.35" fill="#080808"/><rect x="108.86" y="54.43" width="6.35" height="6.35" fill="#070707"/><rect x="114.90" y="54.43" width="6.35" height="6.35" fill="#0f0f0f"/><rect x="120.95" y="54.43" width="6.35" height="6.35" fill="#070707"/><rect x="0.00" y="60.48" width="6.35" height="6.35" fill="#0a0a0a"/><rect x="6.05" y="60.48" width="6.35" height="6.35" fill="#161616"/><rect x="12.10" y="60.48" width="6.35" height="6.35" fill="#111111"/><rect x="18.14" y="60.48" width="6.35" height="6.35" fill="#141414"/><rect x="24.19" y="60.48" width="6.35" height="6.35" fill="#2a2a2a"/><rect x="30.24" y="60.48" width="6.35" height="6.35" fill="#3d3d3d"/><rect x="36.29" y="60.48" width="6.35" height="6.35" fill="#070707"/><rect x="42.33" y="60.48" width="6.35" height="6.35" fill="#272727"/><rect x="48.38" y="60.48" width="6.35" height="6.35" fill="#212121"/><rect x="54.43" y="60.48" width="6.35" height="6.35" fill="#515151"/><rect x="60.48" y="60.48" width="6.35" height="6.35" fill="#ffffff"/><rect x="66.52" y="60.48" width="6.35" height="6.35" fill="#444444"/><rect x="72.57" y="60.48" width="6.35" height="6.35" fill="#080808"/><rect x="78.62" y="60.48" width="6.35" height="6.35" fill="#3d3d3d"/><rect x="84.67" y="60.48" width="6.35" height="6.35" fill="#282828"/><rect x="90.71" y="60.48" width="6.35" height="6.35" fill="#222222"/><rect x="96.76" y="60.48" width="6.35" height="6.35" fill="#0c0c0c"/><rect x="102.81" y="60.48" width="6.35" height="6.35" fill="#0e0e0e"/><rect x="108.86" y="60.48" width="6.35" height="6.35" fill="#0e0e0e"/><rect x="114.90" y="60.48" width="6.35" height="6.35" fill="#131313"/><rect x="120.95" y="60.48" width="6.35" height="6.35" fill="#080808"/><rect x="0.00" y="66.52" width="6.35" height="6.35" fill="#0a0a0a"/><rect x="6.05" y="66.52" width="6.35" height="6.35" fill="#0f0f0f"/><rect x="12.10" y="66.52" width="6.35" height="6.35" fill="#111111"/><rect x="18.14" y="66.52" width="6.35" height="6.35" fill="#0b0b0b"/><rect x="24.19" y="66.52" width="6.35" height="6.35" fill="#212121"/><rect x="30.24" y="66.52" width="6.35" height="6.35" fill="#2a2a2a"/><rect x="36.29" y="66.52" width="6.35" height="6.35" fill="#080808"/><rect x="42.33" y="66.52" width="6.35" height="6.35" fill="#212121"/><rect x="48.38" y="66.52" width="6.35" height="6.35" fill="#191919"/><rect x="54.43" y="66.52" width="6.35" height="6.35" fill="#161616"/><rect x="60.48" y="66.52" width="6.35" height="6.35" fill="#7a7a7a"/><rect x="66.52" y="66.52" width="6.35" height="6.35" fill="#161616"/><rect x="72.57" y="66.52" width="6.35" height="6.35" fill="#070707"/><rect x="78.62" y="66.52" width="6.35" height="6.35" fill="#303030"/><rect x="84.67" y="66.52" width="6.35" height="6.35" fill="#0a0a0a"/><rect x="90.71" y="66.52" width="6.35" height="6.35" fill="#111111"/><rect x="96.76" y="66.52" width="6.35" height="6.35" fill="#0c0c0c"/><rect x="102.81" y="66.52" width="6.35" height="6.35" fill="#070707"/><rect x="108.86" y="66.52" width="6.35" height="6.35" fill="#0e0e0e"/><rect x="114.90" y="66.52" width="6.35" height="6.35" fill="#0c0c0c"/><rect x="120.95" y="66.52" width="6.35" height="6.35" fill="#070707"/><rect x="0.00" y="72.57" width="6.35" height="6.35" fill="#111111"/><rect x="6.05" y="72.57" width="6.35" height="6.35" fill="#131313"/><rect x="12.10" y="72.57" width="6.35" height="6.35" fill="#111111"/><rect x="18.14" y="72.57" width="6.35" height="6.35" fill="#0a0a0a"/><rect x="24.19" y="72.57" width="6.35" height="6.35" fill="#333333"/><rect x="30.24" y="72.57" width="6.35" height="6.35" fill="#3d3d3d"/><rect x="36.29" y="72.57" width="6.35" height="6.35" fill="#111111"/><rect x="42.33" y="72.57" width="6.35" height="6.35" fill="#2f2f2f"/><rect x="48.38" y="72.57" width="6.35" height="6.35" fill="#212121"/><rect x="54.43" y="72.57" width="6.35" height="6.35" fill="#0c0c0c"/><rect x="60.48" y="72.57" width="6.35" height="6.35" fill="#363636"/><rect x="66.52" y="72.57" width="6.35" height="6.35" fill="#161616"/><rect x="72.57" y="72.57" width="6.35" height="6.35" fill="#0a0a0a"/><rect x="78.62" y="72.57" width="6.35" height="6.35" fill="#0e0e0e"/><rect x="84.67" y="72.57" width="6.35" height="6.35" fill="#0b0b0b"/><rect x="90.71" y="72.57" width="6.35" height="6.35" fill="#111111"/><rect x="96.76" y="72.57" width="6.35" height="6.35" fill="#131313"/><rect x="102.81" y="72.57" width="6.35" height="6.35" fill="#0a0a0a"/><rect x="108.86" y="72.57" width="6.35" height="6.35" fill="#070707"/><rect x="114.90" y="72.57" width="6.35" height="6.35" fill="#131313"/><rect x="120.95" y="72.57" width="6.35" height="6.35" fill="#070707"/><rect x="0.00" y="78.62" width="6.35" height="6.35" fill="#141414"/><rect x="6.05" y="78.62" width="6.35" height="6.35" fill="#0c0c0c"/><rect x="12.10" y="78.62" width="6.35" height="6.35" fill="#0a0a0a"/><rect x="18.14" y="78.62" width="6.35" height="6.35" fill="#111111"/><rect x="24.19" y="78.62" width="6.35" height="6.35" fill="#0f0f0f"/><rect x="30.24" y="78.62" width="6.35" height="6.35" fill="#212121"/><rect x="36.29" y="78.62" width="6.35" height="6.35" fill="#212121"/><rect x="42.33" y="78.62" width="6.35" height="6.35" fill="#0a0a0a"/><rect x="48.38" y="78.62" width="6.35" height="6.35" fill="#141414"/><rect x="54.43" y="78.62" width="6.35" height="6.35" fill="#0c0c0c"/><rect x="60.48" y="78.62" width="6.35" height="6.35" fill="#252525"/><rect x="66.52" y="78.62" width="6.35" height="6.35" fill="#0f0f0f"/><rect x="72.57" y="78.62" width="6.35" height="6.35" fill="#080808"/><rect x="78.62" y="78.62" width="6.35" height="6.35" fill="#080808"/><rect x="84.67" y="78.62" width="6.35" height="6.35" fill="#0a0a0a"/><rect x="90.71" y="78.62" width="6.35" height="6.35" fill="#070707"/><rect x="96.76" y="78.62" width="6.35" height="6.35" fill="#252525"/><rect x="102.81" y="78.62" width="6.35" height="6.35" fill="#070707"/><rect x="108.86" y="78.62" width="6.35" height="6.35" fill="#080808"/><rect x="114.90" y="78.62" width="6.35" height="6.35" fill="#131313"/><rect x="120.95" y="78.62" width="6.35" height="6.35" fill="#080808"/><rect x="0.00" y="84.67" width="6.35" height="6.35" fill="#0a0a0a"/><rect x="6.05" y="84.67" width="6.35" height="6.35" fill="#515151"/><rect x="12.10" y="84.67" width="6.35" height="6.35" fill="#0b0b0b"/><rect x="18.14" y="84.67" width="6.35" height="6.35" fill="#111111"/><rect x="24.19" y="84.67" width="6.35" height="6.35" fill="#131313"/><rect x="30.24" y="84.67" width="6.35" height="6.35" fill="#191919"/><rect x="36.29" y="84.67" width="6.35" height="6.35" fill="#2f2f2f"/><rect x="42.33" y="84.67" width="6.35" height="6.35" fill="#0a0a0a"/><rect x="48.38" y="84.67" width="6.35" height="6.35" fill="#0a0a0a"/><rect x="54.43" y="84.67" width="6.35" height="6.35" fill="#0f0f0f"/><rect x="60.48" y="84.67" width="6.35" height="6.35" fill="#2d2d2d"/><rect x="66.52" y="84.67" width="6.35" height="6.35" fill="#0d0d0d"/><rect x="72.57" y="84.67" width="6.35" height="6.35" fill="#070707"/><rect x="78.62" y="84.67" width="6.35" height="6.35" fill="#070707"/><rect x="84.67" y="84.67" width="6.35" height="6.35" fill="#070707"/><rect x="90.71" y="84.67" width="6.35" height="6.35" fill="#080808"/><rect x="96.76" y="84.67" width="6.35" height="6.35" fill="#393939"/><rect x="102.81" y="84.67" width="6.35" height="6.35" fill="#070707"/><rect x="108.86" y="84.67" width="6.35" height="6.35" fill="#080808"/><rect x="114.90" y="84.67" width="6.35" height="6.35" fill="#0c0c0c"/><rect x="120.95" y="84.67" width="6.35" height="6.35" fill="#070707"/><rect x="0.00" y="90.71" width="6.35" height="6.35" fill="#0a0a0a"/><rect x="6.05" y="90.71" width="6.35" height="6.35" fill="#282828"/><rect x="12.10" y="90.71" width="6.35" height="6.35" fill="#0c0c0c"/><rect x="18.14" y="90.71" width="6.35" height="6.35" fill="#0a0a0a"/><rect x="24.19" y="90.71" width="6.35" height="6.35" fill="#0c0c0c"/><rect x="30.24" y="90.71" width="6.35" height="6.35" fill="#131313"/><rect x="36.29" y="90.71" width="6.35" height="6.35" fill="#080808"/><rect x="42.33" y="90.71" width="6.35" height="6.35" fill="#141414"/><rect x="48.38" y="90.71" width="6.35" height="6.35" fill="#111111"/><rect x="54.43" y="90.71" width="6.35" height="6.35" fill="#0c0c0c"/><rect x="60.48" y="90.71" width="6.35" height="6.35" fill="#1d1d1d"/><rect x="66.52" y="90.71" width="6.35" height="6.35" fill="#131313"/><rect x="72.57" y="90.71" width="6.35" height="6.35" fill="#070707"/><rect x="78.62" y="90.71" width="6.35" height="6.35" fill="#0e0e0e"/><rect x="84.67" y="90.71" width="6.35" height="6.35" fill="#0b0b0b"/><rect x="90.71" y="90.71" width="6.35" height="6.35" fill="#111111"/><rect x="96.76" y="90.71" width="6.35" height="6.35" fill="#444444"/><rect x="102.81" y="90.71" width="6.35" height="6.35" fill="#070707"/><rect x="108.86" y="90.71" width="6.35" height="6.35" fill="#080808"/><rect x="114.90" y="90.71" width="6.35" height="6.35" fill="#0d0d0d"/><rect x="120.95" y="90.71" width="6.35" height="6.35" fill="#070707"/><rect x="0.00" y="96.76" width="6.35" height="6.35" fill="#0a0a0a"/><rect x="6.05" y="96.76" width="6.35" height="6.35" fill="#444444"/><rect x="12.10" y="96.76" width="6.35" height="6.35" fill="#0e0e0e"/><rect x="18.14" y="96.76" width="6.35" height="6.35" fill="#111111"/><rect x="24.19" y="96.76" width="6.35" height="6.35" fill="#282828"/><rect x="30.24" y="96.76" width="6.35" height="6.35" fill="#1c1c1c"/><rect x="36.29" y="96.76" width="6.35" height="6.35" fill="#080808"/><rect x="42.33" y="96.76" width="6.35" height="6.35" fill="#0e0e0e"/><rect x="48.38" y="96.76" width="6.35" height="6.35" fill="#0a0a0a"/><rect x="54.43" y="96.76" width="6.35" height="6.35" fill="#161616"/><rect x="60.48" y="96.76" width="6.35" height="6.35" fill="#131313"/><rect x="66.52" y="96.76" width="6.35" height="6.35" fill="#131313"/><rect x="72.57" y="96.76" width="6.35" height="6.35" fill="#070707"/><rect x="78.62" y="96.76" width="6.35" height="6.35" fill="#0e0e0e"/><rect x="84.67" y="96.76" width="6.35" height="6.35" fill="#070707"/><rect x="90.71" y="96.76" width="6.35" height="6.35" fill="#0a0a0a"/><rect x="96.76" y="96.76" width="6.35" height="6.35" fill="#0c0c0c"/><rect x="102.81" y="96.76" width="6.35" height="6.35" fill="#080808"/><rect x="108.86" y="96.76" width="6.35" height="6.35" fill="#424242"/><rect x="114.90" y="96.76" width="6.35" height="6.35" fill="#131313"/><rect x="120.95" y="96.76" width="6.35" height="6.35" fill="#0a0a0a"/><rect x="0.00" y="102.81" width="6.35" height="6.35" fill="#0a0a0a"/><rect x="6.05" y="102.81" width="6.35" height="6.35" fill="#0f0f0f"/><rect x="12.10" y="102.81" width="6.35" height="6.35" fill="#0a0a0a"/><rect x="18.14" y="102.81" width="6.35" height="6.35" fill="#111111"/><rect x="24.19" y="102.81" width="6.35" height="6.35" fill="#222222"/><rect x="30.24" y="102.81" width="6.35" height="6.35" fill="#282828"/><rect x="36.29" y="102.81" width="6.35" height="6.35" fill="#070707"/><rect x="42.33" y="102.81" width="6.35" height="6.35" fill="#0c0c0c"/><rect x="48.38" y="102.81" width="6.35" height="6.35" fill="#141414"/><rect x="54.43" y="102.81" width="6.35" height="6.35" fill="#0c0c0c"/><rect x="60.48" y="102.81" width="6.35" height="6.35" fill="#0d0d0d"/><rect x="66.52" y="102.81" width="6.35" height="6.35" fill="#161616"/><rect x="72.57" y="102.81" width="6.35" height="6.35" fill="#111111"/><rect x="78.62" y="102.81" width="6.35" height="6.35" fill="#333333"/><rect x="84.67" y="102.81" width="6.35" height="6.35" fill="#070707"/><rect x="90.71" y="102.81" width="6.35" height="6.35" fill="#303030"/><rect x="96.76" y="102.81" width="6.35" height="6.35" fill="#303030"/><rect x="102.81" y="102.81" width="6.35" height="6.35" fill="#252525"/><rect x="108.86" y="102.81" width="6.35" height="6.35" fill="#080808"/><rect x="114.90" y="102.81" width="6.35" height="6.35" fill="#0c0c0c"/><rect x="120.95" y="102.81" width="6.35" height="6.35" fill="#070707"/><rect x="0.00" y="108.86" width="6.35" height="6.35" fill="#0a0a0a"/><rect x="6.05" y="108.86" width="6.35" height="6.35" fill="#0c0c0c"/><rect x="12.10" y="108.86" width="6.35" height="6.35" fill="#0c0c0c"/><rect x="18.14" y="108.86" width="6.35" height="6.35" fill="#0b0b0b"/><rect x="24.19" y="108.86" width="6.35" height="6.35" fill="#0d0d0d"/><rect x="30.24" y="108.86" width="6.35" height="6.35" fill="#131313"/><rect x="36.29" y="108.86" width="6.35" height="6.35" fill="#070707"/><rect x="42.33" y="108.86" width="6.35" height="6.35" fill="#0a0a0a"/><rect x="48.38" y="108.86" width="6.35" height="6.35" fill="#0a0a0a"/><rect x="54.43" y="108.86" width="6.35" height="6.35" fill="#0d0d0d"/><rect x="60.48" y="108.86" width="6.35" height="6.35" fill="#0d0d0d"/><rect x="66.52" y="108.86" width="6.35" height="6.35" fill="#111111"/><rect x="72.57" y="108.86" width="6.35" height="6.35" fill="#070707"/><rect x="78.62" y="108.86" width="6.35" height="6.35" fill="#333333"/><rect x="84.67" y="108.86" width="6.35" height="6.35" fill="#111111"/><rect x="90.71" y="108.86" width="6.35" height="6.35" fill="#303030"/><rect x="96.76" y="108.86" width="6.35" height="6.35" fill="#252525"/><rect x="102.81" y="108.86" width="6.35" height="6.35" fill="#252525"/><rect x="108.86" y="108.86" width="6.35" height="6.35" fill="#0b0b0b"/><rect x="114.90" y="108.86" width="6.35" height="6.35" fill="#0c0c0c"/><rect x="120.95" y="108.86" width="6.35" height="6.35" fill="#070707"/><rect x="0.00" y="114.90" width="6.35" height="6.35" fill="#0b0b0b"/><rect x="6.05" y="114.90" width="6.35" height="6.35" fill="#0c0c0c"/><rect x="12.10" y="114.90" width="6.35" height="6.35" fill="#0e0e0e"/><rect x="18.14" y="114.90" width="6.35" height="6.35" fill="#0a0a0a"/><rect x="24.19" y="114.90" width="6.35" height="6.35" fill="#0d0d0d"/><rect x="30.24" y="114.90" width="6.35" height="6.35" fill="#0c0c0c"/><rect x="36.29" y="114.90" width="6.35" height="6.35" fill="#0a0a0a"/><rect x="42.33" y="114.90" width="6.35" height="6.35" fill="#0a0a0a"/><rect x="48.38" y="114.90" width="6.35" height="6.35" fill="#111111"/><rect x="54.43" y="114.90" width="6.35" height="6.35" fill="#0c0c0c"/><rect x="60.48" y="114.90" width="6.35" height="6.35" fill="#131313"/><rect x="66.52" y="114.90" width="6.35" height="6.35" fill="#161616"/><rect x="72.57" y="114.90" width="6.35" height="6.35" fill="#0b0b0b"/><rect x="78.62" y="114.90" width="6.35" height="6.35" fill="#111111"/><rect x="84.67" y="114.90" width="6.35" height="6.35" fill="#0b0b0b"/><rect x="90.71" y="114.90" width="6.35" height="6.35" fill="#171717"/><rect x="96.76" y="114.90" width="6.35" height="6.35" fill="#171717"/><rect x="102.81" y="114.90" width="6.35" height="6.35" fill="#252525"/><rect x="108.86" y="114.90" width="6.35" height="6.35" fill="#070707"/><rect x="114.90" y="114.90" width="6.35" height="6.35" fill="#0d0d0d"/><rect x="120.95" y="114.90" width="6.35" height="6.35" fill="#070707"/><rect x="0.00" y="120.95" width="6.35" height="6.35" fill="#0b0b0b"/><rect x="6.05" y="120.95" width="6.35" height="6.35" fill="#0c0c0c"/><rect x="12.10" y="120.95" width="6.35" height="6.35" fill="#0a0a0a"/><rect x="18.14" y="120.95" width="6.35" height="6.35" fill="#0c0c0c"/><rect x="24.19" y="120.95" width="6.35" height="6.35" fill="#0c0c0c"/><rect x="30.24" y="120.95" width="6.35" height="6.35" fill="#0c0c0c"/><rect x="36.29" y="120.95" width="6.35" height="6.35" fill="#0e0e0e"/><rect x="42.33" y="120.95" width="6.35" height="6.35" fill="#0a0a0a"/><rect x="48.38" y="120.95" width="6.35" height="6.35" fill="#111111"/><rect x="54.43" y="120.95" width="6.35" height="6.35" fill="#161616"/><rect x="60.48" y="120.95" width="6.35" height="6.35" fill="#0d0d0d"/><rect x="66.52" y="120.95" width="6.35" height="6.35" fill="#111111"/><rect x="72.57" y="120.95" width="6.35" height="6.35" fill="#070707"/><rect x="78.62" y="120.95" width="6.35" height="6.35" fill="#080808"/><rect x="84.67" y="120.95" width="6.35" height="6.35" fill="#0e0e0e"/><rect x="90.71" y="120.95" width="6.35" height="6.35" fill="#0e0e0e"/><rect x="96.76" y="120.95" width="6.35" height="6.35" fill="#131313"/><rect x="102.81" y="120.95" width="6.35" height="6.35" fill="#0a0a0a"/><rect x="108.86" y="120.95" width="6.35" height="6.35" fill="#0b0b0b"/><rect x="114.90" y="120.95" width="6.35" height="6.35" fill="#111111"/><rect x="120.95" y="120.95" width="6.35" height="6.35" fill="#111111"/></g><path d="M0 0 L153 153 M153 0 L0 153" stroke="#ebe8dc" stroke-width="1"/><path d="M13 13 L140 140 M140 13 L13 140" stroke="#a8a490" stroke-width="0.9"/></svg><div class="a" style="left:9px;top:499px;width:453px;height:170px;border-radius:8px;background:#e4e4e4"></div><div class="a" style="left:10px;top:500px;width:451px;height:170px;border-radius:7px;background:#f0f0f0;border:1px solid #cfcfcf"></div><svg class="a" style="left:17px;top:508px" width="12" height="11"><rect x="0.5" y="0.5" width="11" height="10" fill="#f4f4f4" stroke="#8aa8a0"/><rect x="2" y="2" width="4" height="7" fill="#3f8a70"/><rect x="8" y="6" width="2.5" height="3.5" fill="#e8b8b8"/></svg><div class="t" style="left:34.5px;top:506.5px;font-size:11px;letter-spacing:-0.35px;color:#9a9a9a">Aperture properties (view and edit)</div><div class="t" style="left:399px;top:506.5px;font-size:11px;color:#9a9a9a">?</div><svg class="a" style="left:435.5px;top:507.5px" width="11" height="11"><path d="M0.5 0.5 L10.5 10.5 M10.5 0.5 L0.5 10.5" stroke="#8a8a8a" stroke-width="1"/></svg><div class="a" style="left:20px;top:536px;width:432px;height:123px;background:#fff;border-left:1px solid #d0d0d0;border-top:1px solid #d8d8d8"></div><div class="a" style="left:21px;top:537px;width:431px;height:15px;background:linear-gradient(#ffffff,#f4f4f4);border-bottom:1px solid #d0d0d0"></div><div class="a" style="left:21px;top:552px;width:8px;height:107px;background:#f4f4f4;border-right:1px solid #d8d8d8"></div><div class="t" style="left:29px;width:84.5px;text-align:center;top:539.0px;">name</div><div class="t" style="left:113.5px;width:85.0px;text-align:center;top:539.0px;">x,y</div><div class="t" style="left:198.5px;width:84.0px;text-align:center;top:539.0px;">thresh</div><div class="t" style="left:282.5px;width:85.0px;text-align:center;top:539.0px;">def mask radius</div><div class="t" style="left:367.5px;width:83.5px;text-align:center;top:539.0px;">color</div><div class="a" style="left:113.5px;top:537px;width:1.0px;height:122px;background:#dadada"></div><div class="a" style="left:198.5px;top:537px;width:1.0px;height:122px;background:#dadada"></div><div class="a" style="left:282.5px;top:537px;width:1.0px;height:122px;background:#dadada"></div><div class="a" style="left:367.5px;top:537px;width:1.0px;height:122px;background:#dadada"></div><div class="a" style="left:451px;top:537px;width:1px;height:122px;background:#d8d8d8"></div><div class="a" style="left:21px;top:576px;width:430px;height:1px;background:#dcdcdc"></div><div class="t" style="left:23.5px;top:560.0px;">1</div><div class="t" style="left:32.5px;top:560.0px;">target</div><div class="t" style="left:117.0px;top:560.0px;">(357, 296)</div><div class="t" style="left:202.0px;top:560.0px;">99999</div><div class="t" style="left:286.0px;top:560.0px;">2.4</div><div class="t" style="left:371.0px;top:560.0px;">red (standard)</div><div class="a" style="left:29px;top:577px;width:422px;height:25px;background:#e8e8e8"></div><div class="a" style="left:21px;top:601px;width:430px;height:1px;background:#dcdcdc"></div><div class="t" style="left:23.5px;top:585.0px;">2</div><div class="t" style="left:32.5px;top:585.0px;">ref1</div><div class="t" style="left:117.0px;top:585.0px;">(499, 278)</div><div class="t" style="left:202.0px;top:585.0px;">99999</div><div class="t" style="left:286.0px;top:585.0px;">2.4</div><div class="t" style="left:371.0px;top:585.0px;">yellow (tracking ...</div><div class="a" style="left:21px;top:626.5px;width:430px;height:1.0px;background:#dcdcdc"></div><div class="t" style="left:23.5px;top:610.2px;">3</div><div class="t" style="left:32.5px;top:610.2px;">ref2</div><div class="t" style="left:117.0px;top:610.2px;">(205, 296)</div><div class="t" style="left:202.0px;top:610.2px;">99999</div><div class="t" style="left:286.0px;top:610.2px;">2.4</div><div class="t" style="left:371.0px;top:610.2px;">yellow (tracking ...</div><div class="a" style="left:29px;top:627.5px;width:422px;height:25.5px;background:#e8e8e8"></div><div class="a" style="left:21px;top:652px;width:430px;height:1px;background:#dcdcdc"></div><div class="t" style="left:23.5px;top:635.8px;">4</div><div class="t" style="left:32.5px;top:635.8px;">no-star</div><div class="t" style="left:117.0px;top:635.8px;">(394, 297)</div><div class="t" style="left:202.0px;top:635.8px;">99999</div><div class="t" style="left:286.0px;top:635.8px;">2.4</div><div class="t" style="left:371.0px;top:635.8px;">green (connect t...</div><div class="a" style="left:21px;top:677px;width:430px;height:1px;background:#dcdcdc"></div><div class="a" style="left:113.5px;top:552px;width:1.0px;height:107px;background:#dadada"></div><div class="a" style="left:198.5px;top:552px;width:1.0px;height:107px;background:#dadada"></div><div class="a" style="left:282.5px;top:552px;width:1.0px;height:107px;background:#dadada"></div><div class="a" style="left:367.5px;top:552px;width:1.0px;height:107px;background:#dadada"></div></body></html>
